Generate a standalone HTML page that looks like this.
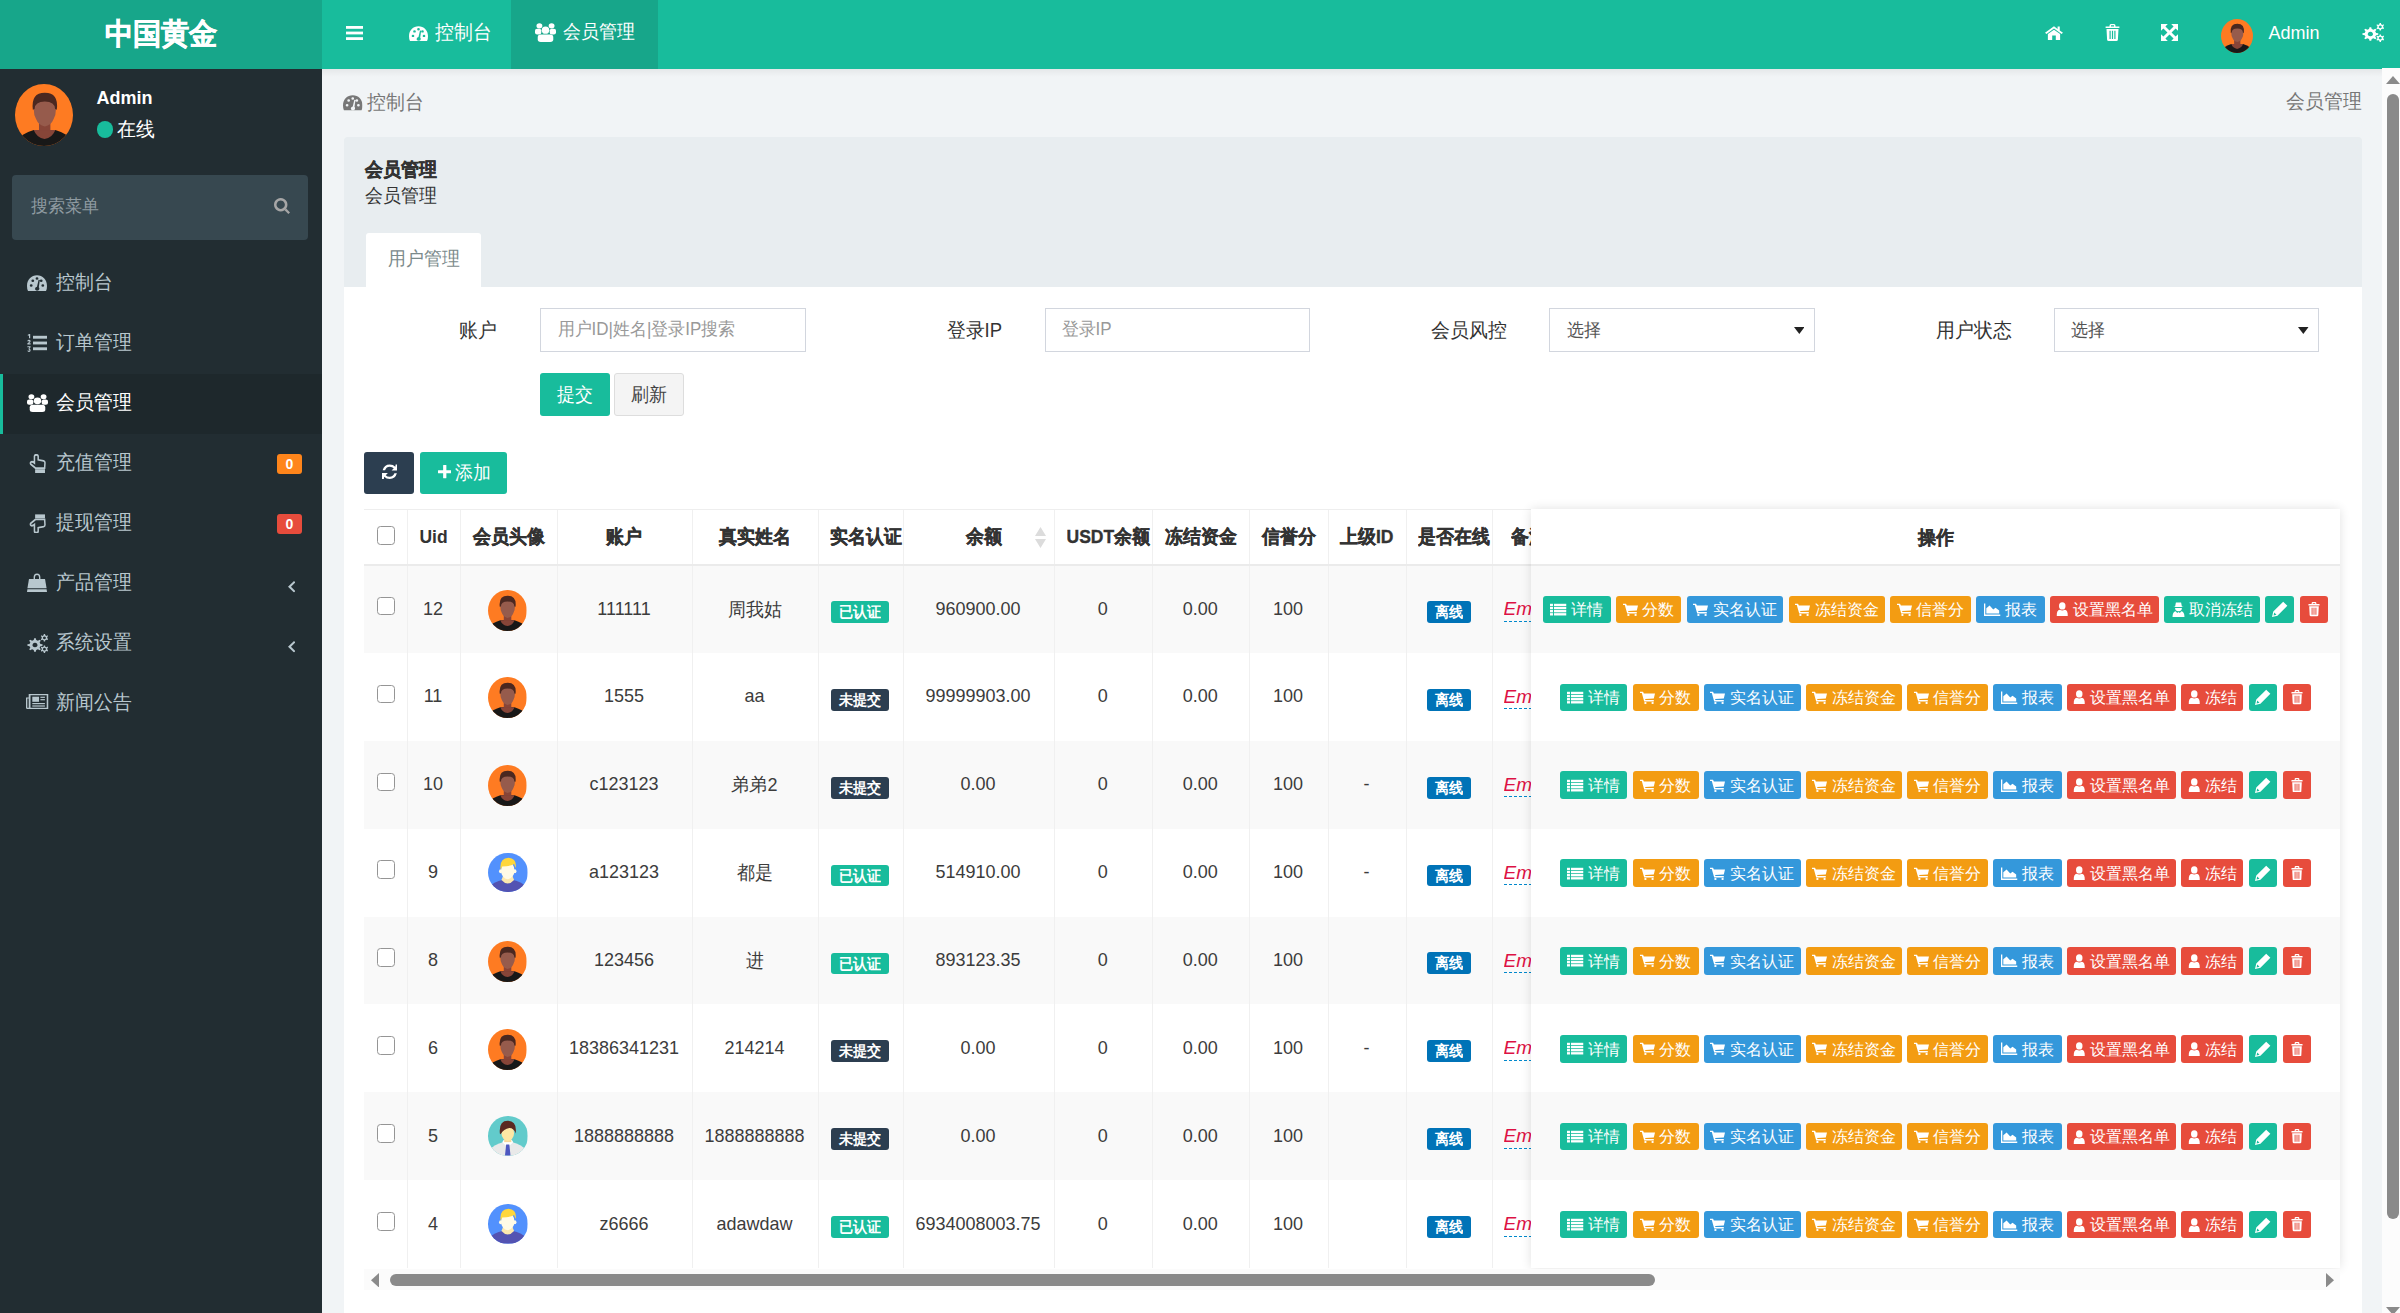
<!DOCTYPE html>
<html><head><meta charset="utf-8"><title>会员管理</title>
<style>
html,body{margin:0;padding:0}
body{width:2400px;height:1313px;overflow:hidden;position:relative;background:#f1f4f6;font-family:"Liberation Sans",sans-serif}
.a{position:absolute}
.t{white-space:nowrap;transform:scaleY(1.06)}
.b{-webkit-text-stroke:0.35px currentColor}
.btn{border-radius:3px;display:flex;align-items:center;justify-content:center;gap:4.5px;box-sizing:border-box}
</style></head><body>

<svg width="0" height="0" style="position:absolute">
<defs>
<symbol id="bars" viewBox="0 0 100 100"><rect x="0" y="0" width="100" height="20"/><rect x="0" y="40" width="100" height="20"/><rect x="0" y="80" width="100" height="20"/></symbol>
<symbol id="dash" viewBox="0 0 100 100"><path fill-rule="evenodd" d="M5 100 Q0 88 0 68 C0 28 22 2 50 2 C78 2 100 28 100 68 Q100 88 95 100 Z M14 66 a7 8 0 1 0 14 0 a7 8 0 1 0 -14 0 Z M22 36 a7 8 0 1 0 14 0 a7 8 0 1 0 -14 0 Z M43 22 a7 8 0 1 0 14 0 a7 8 0 1 0 -14 0 Z M64 36 a7 8 0 1 0 14 0 a7 8 0 1 0 -14 0 Z M72 66 a7 8 0 1 0 14 0 a7 8 0 1 0 -14 0 Z M40 88 Q40 76 50 74 L58 30 L64 32 L59 76 Q62 80 62 88 Q60 98 50 98 Q40 96 40 88 Z"/></symbol>
<symbol id="users" viewBox="0 0 100 100"><circle cx="21" cy="15" r="14"/><circle cx="79" cy="15" r="14"/><rect x="0" y="30" width="30" height="30" rx="10"/><rect x="70" y="30" width="30" height="30" rx="10"/><ellipse cx="50" cy="38" rx="18" ry="19"/><rect x="13" y="60" width="74" height="40" rx="14"/></symbol>
<symbol id="home" viewBox="0 0 100 100"><path d="M50 8 L0 52 L8 60 L50 24 L92 60 L100 52 L82 36 L82 10 L70 10 L70 26 Z"/><path d="M16 60 L50 32 L84 60 L84 100 L60 100 L60 70 L40 70 L40 100 L16 100 Z"/></symbol>
<symbol id="trash" viewBox="0 0 100 100"><path d="M30 10 Q30 0 40 0 L60 0 Q70 0 70 10 L70 14 L96 14 L96 24 L4 24 L4 14 L30 14 Z M40 8 L40 14 L60 14 L60 8 Z" fill-rule="evenodd"/><path d="M10 30 L90 30 L86 92 Q85 100 76 100 L24 100 Q15 100 14 92 Z M30 40 L30 88 L38 88 L38 40 Z M46 40 L46 88 L54 88 L54 40 Z M62 40 L62 88 L70 88 L70 40 Z" fill-rule="evenodd"/></symbol>
<symbol id="expand" viewBox="0 0 100 100"><path d="M0 0 L40 0 L26 14 L50 38 L74 14 L60 0 L100 0 L100 40 L86 26 L62 50 L86 74 L100 60 L100 100 L60 100 L74 86 L50 62 L26 86 L40 100 L0 100 L0 60 L14 74 L38 50 L14 26 L0 40 Z"/></symbol>
<symbol id="cogs" viewBox="0 0 100 100"><path d="M34 22 L42 22 L44 32 L52 36 L60 30 L66 36 L60 44 L64 52 L74 54 L74 62 L64 64 L60 72 L66 80 L60 86 L52 80 L44 84 L42 94 L34 94 L32 84 L24 80 L16 86 L10 80 L16 72 L12 64 L2 62 L2 54 L12 52 L16 44 L10 36 L16 30 L24 36 L32 32 Z M38 46 a12 12 0 1 0 .1 0 Z" fill-rule="evenodd"/><path d="M80 0 L86 0 L87 7 L93 10 L98 6 L100 12 L96 16 L97 22 L100 26 L98 32 L92 30 L87 33 L86 40 L80 40 L79 33 L73 30 L68 33 L66 27 L70 22 L70 16 L66 12 L68 6 L73 10 L79 7 Z M83 13 a7 7 0 1 0 .1 0 Z" fill-rule="evenodd"/><path d="M80 60 L86 60 L87 67 L93 70 L98 66 L100 72 L96 76 L97 82 L100 86 L98 92 L92 90 L87 93 L86 100 L80 100 L79 93 L73 90 L68 93 L66 87 L70 82 L70 76 L66 72 L68 66 L73 70 L79 67 Z M83 73 a7 7 0 1 0 .1 0 Z" fill-rule="evenodd"/></symbol>
<symbol id="search" viewBox="0 0 100 100"><path d="M42 0 a42 42 0 1 0 .1 0 Z M42 16 a26 26 0 1 1 -.1 0 Z" fill-rule="evenodd"/><path d="M66 76 L76 66 L100 90 L90 100 Z"/></symbol>
<symbol id="listol" viewBox="0 0 100 100"><rect x="30" y="10" width="70" height="16"/><rect x="30" y="42" width="70" height="16"/><rect x="30" y="74" width="70" height="16"/><path d="M4 4 L12 0 L16 0 L16 24 L10 24 L10 8 L4 10 Z"/><path d="M2 40 Q2 32 10 32 Q18 32 18 40 Q18 46 10 52 L18 52 L18 58 L2 58 L2 52 Q12 44 12 40 Q12 38 10 38 Q8 38 8 41 Z"/><path d="M2 68 L18 68 L18 74 L12 80 Q18 82 18 90 Q18 100 10 100 Q2 100 2 92 L8 92 Q8 94 10 94 Q12 94 12 90 Q12 86 8 86 L8 80 L12 74 L2 74 Z"/></symbol>
<symbol id="handup" viewBox="0 0 100 100"><path d="M32 46 L32 11 Q32 4 43 4 Q54 4 54 11 L54 30 L86 35 Q94 37 94 45 L92 72 L38 72 L11 53 Q5 46 12 41 Q20 37 32 46 Z" fill="none" stroke-width="9"/><rect x="36" y="78" width="58" height="20"/></symbol>
<symbol id="handdown" viewBox="0 0 100 100"><path d="M32 54 L32 89 Q32 96 43 96 Q54 96 54 89 L54 70 L86 65 Q94 63 94 55 L92 28 L38 28 L11 47 Q5 54 12 59 Q20 63 32 54 Z" fill="none" stroke-width="9"/><rect x="36" y="2" width="58" height="20"/></symbol>
<symbol id="bag" viewBox="0 0 100 100"><path d="M33 38 L33 22 Q33 2 50 2 Q67 2 67 22 L67 38 L60 38 L60 22 Q60 10 50 10 Q40 10 40 22 L40 38 Z"/><path d="M10 32 L90 32 L98 80 L2 80 Z"/><path d="M2 86 L98 86 L100 100 L0 100 Z"/></symbol>
<symbol id="news" viewBox="0 0 100 100"><path d="M12 0 L100 0 L100 100 L6 100 Q0 100 0 92 L0 24 L12 24 Z M20 8 L20 92 L92 92 L92 8 Z M6 30 L6 92 L12 92 L12 30 Z" fill-rule="evenodd"/><rect x="28" y="18" width="30" height="34"/><rect x="64" y="18" width="20" height="8"/><rect x="64" y="34" width="20" height="8"/><rect x="28" y="60" width="56" height="8"/><rect x="28" y="76" width="56" height="8"/></symbol>
<symbol id="angleleft" viewBox="0 0 100 100"><path d="M100 12 L40 50 L100 88 L80 100 L0 50 L80 0 Z"/></symbol>
<symbol id="refresh" viewBox="0 0 100 100"><path d="M88 4 L100 4 L100 42 L62 42 L76 28 Q66 18 50 18 Q28 18 20 40 L4 40 Q14 4 50 4 Q72 4 86 18 Z"/><path d="M12 96 L0 96 L0 58 L38 58 L24 72 Q34 82 50 82 Q72 82 80 60 L96 60 Q86 96 50 96 Q28 96 14 82 Z"/></symbol>
<symbol id="plus" viewBox="0 0 100 100"><rect x="38" y="0" width="24" height="100" rx="3"/><rect x="0" y="38" width="100" height="24" rx="3"/></symbol>
<symbol id="list" viewBox="0 0 100 100"><rect x="0" y="6" width="18" height="18"/><rect x="24" y="6" width="76" height="18"/><rect x="0" y="30" width="18" height="18"/><rect x="24" y="30" width="76" height="18"/><rect x="0" y="54" width="18" height="18"/><rect x="24" y="54" width="76" height="18"/><rect x="0" y="78" width="18" height="18"/><rect x="24" y="78" width="76" height="18"/></symbol>
<symbol id="cart" viewBox="0 0 100 100"><path d="M0 6 L20 6 L26 20 L100 20 L92 58 L34 62 L36 70 L92 70 L92 80 L28 80 L12 16 L0 16 Z"/><circle cx="36" cy="92" r="8"/><circle cx="84" cy="92" r="8"/><path d="M56 26 L64 26 L64 34 L72 34 L72 42 L64 42 L64 50 L56 50 L56 42 L48 42 L48 34 L56 34 Z" fill="#000" opacity=".0"/></symbol>
<symbol id="area" viewBox="0 0 100 100"><path d="M0 4 L8 4 L8 88 L100 88 L100 100 L0 100 Z"/><path d="M14 80 L14 40 L34 20 L56 50 L70 36 L92 58 L92 80 Z"/></symbol>
<symbol id="user" viewBox="0 0 100 100"><circle cx="50" cy="28" r="26"/><path d="M6 100 Q4 60 30 56 Q50 66 70 56 Q96 60 94 100 Z"/></symbol>
<symbol id="secret" viewBox="0 0 100 100"><path d="M30 4 L70 4 L76 30 L90 34 L10 34 L24 30 Z"/><path d="M24 40 L76 40 Q78 60 50 62 Q22 60 24 40 Z"/><path d="M4 100 Q4 66 28 62 L40 74 L50 66 L60 74 L72 62 Q96 66 96 100 Z"/></symbol>
<symbol id="pencil" viewBox="0 0 100 100"><path d="M70 4 L96 30 L34 92 L0 100 L8 66 Z M14 72 L10 90 L28 86 Z" fill-rule="evenodd"/></symbol>
<symbol id="caret" viewBox="0 0 100 100"><path d="M0 0 L100 0 L50 100 Z"/></symbol>
</defs></svg>

<div class="a" style="left:0px;top:0px;width:322px;height:68.6px;background:#17a68a"></div>
<div class="a" style="left:322px;top:0px;width:2078px;height:68.6px;background:#18bc9c"></div>
<div class="a t b" style="left:0.00px;top:13.50px;width:322px;line-height:40px;height:40px;font-size:28px;color:#fff;font-weight:bold;text-align:center;">中国黄金</div>
<svg class="a" style="left:346px;top:26px;" width="17" height="14" viewBox="0 0 100 100" preserveAspectRatio="none" fill="#fff" stroke="#fff" stroke-width="0"><use href="#bars"/></svg>
<svg class="a" style="left:409px;top:26px;" width="19" height="15" viewBox="0 0 100 100" preserveAspectRatio="none" fill="#fff" stroke="#fff" stroke-width="0"><use href="#dash"/></svg>
<div class="a t" style="left:435.00px;top:19.00px;width:600px;line-height:27px;height:27px;font-size:19px;color:#fff;font-weight:normal;text-align:left;">控制台</div>
<div class="a" style="left:511px;top:0px;width:146.5px;height:68.6px;background:#17a68a"></div>
<svg class="a" style="left:535px;top:23px;" width="21" height="19" viewBox="0 0 100 100" preserveAspectRatio="none" fill="#fff" stroke="#fff" stroke-width="0"><use href="#users"/></svg>
<div class="a t" style="left:563.00px;top:20.00px;width:600px;line-height:25px;height:25px;font-size:18px;color:#fff;font-weight:normal;text-align:left;">会员管理</div>
<svg class="a" style="left:2045px;top:25px;" width="18" height="15" viewBox="0 0 100 100" preserveAspectRatio="none" fill="#fff" stroke="#fff" stroke-width="0"><use href="#home"/></svg>
<svg class="a" style="left:2105px;top:24px;" width="15" height="17" viewBox="0 0 100 100" preserveAspectRatio="none" fill="#fff" stroke="#fff" stroke-width="0"><use href="#trash"/></svg>
<svg class="a" style="left:2161px;top:24px;" width="17" height="17" viewBox="0 0 100 100" preserveAspectRatio="none" fill="#fff" stroke="#fff" stroke-width="0"><use href="#expand"/></svg>
<div class="a" style="left:2221px;top:19px;width:32px;height:34px;border-radius:50%;overflow:hidden"><svg width="100%" height="100%" viewBox="0 0 100 100" preserveAspectRatio="none" style="display:block"><rect width="100" height="100" fill="#fe7b22"/><path d="M0 100 L0 92 L12 82 Q22 76 32 73.5 L69 73.5 Q79 76 89 82 L100 92 L100 100 Z" fill="#181818"/><path d="M32 73.5 L69 73.5 Q64 86 50.5 88 Q37 86 32 73.5 Z" fill="#874538"/><rect x="41" y="60" width="19.5" height="15" fill="#874538"/><path d="M32 40 Q31 27 40 24 L61 24 Q70 27 70 40 Q70 50 66 56 Q62 66 51 68 Q40 66 36 56 Q32 50 32 40 Z" fill="#965b4c"/><path d="M30.5 41 Q27 14 51 14 Q75 14 71.5 41 L68.5 40 Q68 28 51 28 Q34 28 33.5 40 Z" fill="#4b2820"/></svg></div>
<div class="a t" style="left:2268.50px;top:20.00px;width:600px;line-height:26px;height:26px;font-size:18px;color:#fff;font-weight:normal;text-align:left;">Admin</div>
<svg class="a" style="left:2362px;top:23px;" width="22" height="19" viewBox="0 0 100 100" preserveAspectRatio="none" fill="#fff" stroke="#fff" stroke-width="0"><use href="#cogs"/></svg>
<div class="a" style="left:0px;top:68.6px;width:322px;height:1245px;background:#222d32"></div>
<div class="a" style="left:14.5px;top:83.8px;width:58.5px;height:62.5px;border-radius:50%;overflow:hidden"><svg width="100%" height="100%" viewBox="0 0 100 100" preserveAspectRatio="none" style="display:block"><rect width="100" height="100" fill="#fe7b22"/><path d="M0 100 L0 92 L12 82 Q22 76 32 73.5 L69 73.5 Q79 76 89 82 L100 92 L100 100 Z" fill="#181818"/><path d="M32 73.5 L69 73.5 Q64 86 50.5 88 Q37 86 32 73.5 Z" fill="#874538"/><rect x="41" y="60" width="19.5" height="15" fill="#874538"/><path d="M32 40 Q31 27 40 24 L61 24 Q70 27 70 40 Q70 50 66 56 Q62 66 51 68 Q40 66 36 56 Q32 50 32 40 Z" fill="#965b4c"/><path d="M30.5 41 Q27 14 51 14 Q75 14 71.5 41 L68.5 40 Q68 28 51 28 Q34 28 33.5 40 Z" fill="#4b2820"/></svg></div>
<div class="a t" style="left:96.50px;top:85.00px;width:600px;line-height:26px;height:26px;font-size:18px;color:#fff;font-weight:bold;text-align:left;">Admin</div>
<div class="a" style="left:96.5px;top:121px;width:16.5px;height:16.5px;background:#18bc9c;border-radius:50%"></div>
<div class="a t" style="left:117.00px;top:115.50px;width:600px;line-height:27px;height:27px;font-size:19px;color:#fff;font-weight:normal;text-align:left;">在线</div>
<div class="a" style="left:12px;top:175px;width:296px;height:64.5px;background:#374850;border-radius:4px"></div>
<div class="a t" style="left:30.50px;top:194.50px;width:600px;line-height:24px;height:24px;font-size:17px;color:#8f9ba1;font-weight:normal;text-align:left;">搜索菜单</div>
<svg class="a" style="left:274px;top:198px;" width="16" height="16" viewBox="0 0 100 100" preserveAspectRatio="none" fill="#a6a6a6" stroke="#a6a6a6" stroke-width="0"><use href="#search"/></svg>
<svg class="a" style="left:27px;top:275.3px;" width="20" height="16" viewBox="0 0 100 100" preserveAspectRatio="none" fill="#b8c7ce" stroke="#b8c7ce" stroke-width="0"><use href="#dash"/></svg>
<div class="a t" style="left:55.50px;top:270.30px;width:600px;line-height:26px;height:26px;font-size:18.7px;color:#b8c7ce;font-weight:normal;text-align:left;">控制台</div>
<svg class="a" style="left:27px;top:334.3px;" width="20" height="18" viewBox="0 0 100 100" preserveAspectRatio="none" fill="#b8c7ce" stroke="#b8c7ce" stroke-width="0"><use href="#listol"/></svg>
<div class="a t" style="left:55.50px;top:330.30px;width:600px;line-height:26px;height:26px;font-size:18.7px;color:#b8c7ce;font-weight:normal;text-align:left;">订单管理</div>
<div class="a" style="left:0px;top:373.8px;width:322px;height:60px;background:#1e282c"></div>
<div class="a" style="left:0px;top:373.8px;width:2.5px;height:60px;background:#18bc9c"></div>
<svg class="a" style="left:27px;top:394.3px;" width="21" height="18" viewBox="0 0 100 100" preserveAspectRatio="none" fill="#fff" stroke="#fff" stroke-width="0"><use href="#users"/></svg>
<div class="a t" style="left:55.50px;top:390.30px;width:600px;line-height:26px;height:26px;font-size:18.7px;color:#fff;font-weight:normal;text-align:left;">会员管理</div>
<svg class="a" style="left:29px;top:453.55px;" width="17" height="19.5" viewBox="0 0 100 100" preserveAspectRatio="none" fill="#b8c7ce" stroke="#b8c7ce" stroke-width="0"><use href="#handup"/></svg>
<div class="a t" style="left:55.50px;top:450.30px;width:600px;line-height:26px;height:26px;font-size:18.7px;color:#b8c7ce;font-weight:normal;text-align:left;">充值管理</div>
<svg class="a" style="left:29px;top:513.55px;" width="17" height="19.5" viewBox="0 0 100 100" preserveAspectRatio="none" fill="#b8c7ce" stroke="#b8c7ce" stroke-width="0"><use href="#handdown"/></svg>
<div class="a t" style="left:55.50px;top:510.30px;width:600px;line-height:26px;height:26px;font-size:18.7px;color:#b8c7ce;font-weight:normal;text-align:left;">提现管理</div>
<svg class="a" style="left:27px;top:572.8px;" width="20" height="19" viewBox="0 0 100 100" preserveAspectRatio="none" fill="#b8c7ce" stroke="#b8c7ce" stroke-width="0"><use href="#bag"/></svg>
<div class="a t" style="left:55.50px;top:570.30px;width:600px;line-height:26px;height:26px;font-size:18.7px;color:#b8c7ce;font-weight:normal;text-align:left;">产品管理</div>
<svg class="a" style="left:27px;top:633.8px;" width="21" height="19" viewBox="0 0 100 100" preserveAspectRatio="none" fill="#b8c7ce" stroke="#b8c7ce" stroke-width="0"><use href="#cogs"/></svg>
<div class="a t" style="left:55.50px;top:630.30px;width:600px;line-height:26px;height:26px;font-size:18.7px;color:#b8c7ce;font-weight:normal;text-align:left;">系统设置</div>
<svg class="a" style="left:26px;top:694.0px;" width="22.5" height="15" viewBox="0 0 100 100" preserveAspectRatio="none" fill="#b8c7ce" stroke="#b8c7ce" stroke-width="0"><use href="#news"/></svg>
<div class="a t" style="left:55.50px;top:690.30px;width:600px;line-height:26px;height:26px;font-size:18.7px;color:#b8c7ce;font-weight:normal;text-align:left;">新闻公告</div>
<div class="a" style="left:277px;top:453.8px;width:25px;height:20.3px;background:#ff851b;border-radius:3px"></div>
<div class="a t" style="left:277.00px;top:453.90px;width:25px;line-height:20px;height:20px;font-size:14px;color:#fff;font-weight:bold;text-align:center;">0</div>
<div class="a" style="left:277px;top:513.7px;width:25px;height:20.6px;background:#e74c3c;border-radius:3px"></div>
<div class="a t" style="left:277.00px;top:514.00px;width:25px;line-height:20px;height:20px;font-size:14px;color:#fff;font-weight:bold;text-align:center;">0</div>
<svg class="a" style="left:287.5px;top:581px;" width="7.5" height="11.5" viewBox="0 0 100 100" preserveAspectRatio="none" fill="#b8c7ce" stroke="#b8c7ce" stroke-width="0"><use href="#angleleft"/></svg>
<svg class="a" style="left:287.5px;top:641px;" width="7.5" height="11.5" viewBox="0 0 100 100" preserveAspectRatio="none" fill="#b8c7ce" stroke="#b8c7ce" stroke-width="0"><use href="#angleleft"/></svg>
<div class="a" style="left:322px;top:68.6px;width:2060px;height:1245px;background:#f1f4f6"></div>
<div class="a" style="left:322px;top:68.6px;width:2060px;height:8px;background:linear-gradient(rgba(0,0,0,.05),rgba(0,0,0,0))"></div>
<svg class="a" style="left:343px;top:95px;" width="19.5" height="15.5" viewBox="0 0 100 100" preserveAspectRatio="none" fill="#777" stroke="#777" stroke-width="0"><use href="#dash"/></svg>
<div class="a t" style="left:366.50px;top:88.50px;width:600px;line-height:27px;height:27px;font-size:19px;color:#777;font-weight:normal;text-align:left;">控制台</div>
<div class="a t" style="left:2161.50px;top:89.00px;width:200px;line-height:26px;height:26px;font-size:18.5px;color:#777;font-weight:normal;text-align:right;">会员管理</div>
<div class="a" style="left:344px;top:137px;width:2017.5px;height:1200px;background:#fff;border-radius:3px"></div>
<div class="a" style="left:344px;top:137px;width:2017.5px;height:150px;background:#e8edf0;border-radius:3px 3px 0 0"></div>
<div class="a t b" style="left:364.50px;top:157.50px;width:600px;line-height:25px;height:25px;font-size:18px;color:#333;font-weight:bold;text-align:left;">会员管理</div>
<div class="a t" style="left:365.00px;top:183.50px;width:600px;line-height:25px;height:25px;font-size:18.2px;color:#333;font-weight:normal;text-align:left;">会员管理</div>
<div class="a" style="left:365.5px;top:233px;width:115px;height:54px;background:#fff;border-radius:3px 3px 0 0"></div>
<div class="a t" style="left:366.00px;top:247.00px;width:115px;line-height:25px;height:25px;font-size:18.2px;color:#7b8a8b;font-weight:normal;text-align:center;">用户管理</div>
<div class="a t" style="left:296.50px;top:317.50px;width:200px;line-height:26px;height:26px;font-size:18.5px;color:#333;font-weight:normal;text-align:right;">账户</div>
<div class="a" style="left:540px;top:308px;width:265.5px;height:43.5px;background:#fff;border:1px solid #d2d6de;box-sizing:border-box"></div>
<div class="a t" style="left:802.00px;top:317.50px;width:200px;line-height:26px;height:26px;font-size:18.5px;color:#333;font-weight:normal;text-align:right;">登录IP</div>
<div class="a" style="left:1044.7px;top:308px;width:265.5px;height:43.5px;background:#fff;border:1px solid #d2d6de;box-sizing:border-box"></div>
<div class="a t" style="left:1307.00px;top:317.50px;width:200px;line-height:26px;height:26px;font-size:18.5px;color:#333;font-weight:normal;text-align:right;">会员风控</div>
<div class="a" style="left:1549.3px;top:308px;width:265.5px;height:43.5px;background:#fff;border:1px solid #d2d6de;box-sizing:border-box"></div>
<div class="a t" style="left:1811.50px;top:317.50px;width:200px;line-height:26px;height:26px;font-size:18.5px;color:#333;font-weight:normal;text-align:right;">用户状态</div>
<div class="a" style="left:2053.5px;top:308px;width:265.5px;height:43.5px;background:#fff;border:1px solid #d2d6de;box-sizing:border-box"></div>
<div class="a t" style="left:557.50px;top:317.50px;width:600px;line-height:24px;height:24px;font-size:17px;color:#999;font-weight:normal;text-align:left;">用户ID|姓名|登录IP搜索</div>
<div class="a t" style="left:1061.50px;top:317.50px;width:600px;line-height:24px;height:24px;font-size:17px;color:#999;font-weight:normal;text-align:left;">登录IP</div>
<div class="a t" style="left:1566.50px;top:317.50px;width:600px;line-height:24px;height:24px;font-size:17.3px;color:#555;font-weight:normal;text-align:left;">选择</div>
<div class="a t" style="left:2071.00px;top:317.50px;width:600px;line-height:24px;height:24px;font-size:17.3px;color:#555;font-weight:normal;text-align:left;">选择</div>
<svg class="a" style="left:1793.8px;top:327px;" width="10.6" height="7" viewBox="0 0 100 100" preserveAspectRatio="none" fill="#222" stroke="#222" stroke-width="0"><use href="#caret"/></svg>
<svg class="a" style="left:2298px;top:327px;" width="10.6" height="7" viewBox="0 0 100 100" preserveAspectRatio="none" fill="#222" stroke="#222" stroke-width="0"><use href="#caret"/></svg>
<div class="a" style="left:540px;top:373px;width:69.7px;height:43px;background:#18bc9c;border-radius:3px"></div>
<div class="a t" style="left:540.05px;top:382.50px;width:69.7px;line-height:24px;height:24px;font-size:17.5px;color:#fff;font-weight:normal;text-align:center;">提交</div>
<div class="a" style="left:614px;top:373px;width:70px;height:43px;background:#f4f4f4;border:1px solid #ddd;border-radius:3px;box-sizing:border-box"></div>
<div class="a t" style="left:614.00px;top:382.50px;width:70px;line-height:24px;height:24px;font-size:17.5px;color:#444;font-weight:normal;text-align:center;">刷新</div>
<div class="a" style="left:364px;top:451.7px;width:50px;height:42.3px;background:#2c3e50;border-radius:3px"></div>
<svg class="a" style="left:381.5px;top:464px;" width="15.5" height="15.5" viewBox="0 0 100 100" preserveAspectRatio="none" fill="#fff" stroke="#fff" stroke-width="0"><use href="#refresh"/></svg>
<div class="a" style="left:420px;top:451.7px;width:87px;height:42.3px;background:#18bc9c;border-radius:3px"></div>
<svg class="a" style="left:437.5px;top:465px;" width="13.5" height="13.5" viewBox="0 0 100 100" preserveAspectRatio="none" fill="#fff" stroke="#fff" stroke-width="0"><use href="#plus"/></svg>
<div class="a t" style="left:455.00px;top:460.50px;width:600px;line-height:24px;height:24px;font-size:17.5px;color:#fff;font-weight:normal;text-align:left;">添加</div>
<div class="a" style="left:364px;top:508.5px;width:1976px;height:759.5px;background:#fff"></div>
<div class="a" style="left:364px;top:565.0px;width:1976px;height:87.875px;background:#f9f9f9"></div>
<div class="a" style="left:364px;top:740.75px;width:1976px;height:87.875px;background:#f9f9f9"></div>
<div class="a" style="left:364px;top:916.5px;width:1976px;height:87.875px;background:#f9f9f9"></div>
<div class="a" style="left:364px;top:1092.25px;width:1976px;height:87.875px;background:#f9f9f9"></div>
<div class="a" style="left:407px;top:508.5px;width:1px;height:759.5px;background:#f0f0f0"></div>
<div class="a" style="left:459.5px;top:508.5px;width:1px;height:759.5px;background:#f0f0f0"></div>
<div class="a" style="left:556.5px;top:508.5px;width:1px;height:759.5px;background:#f0f0f0"></div>
<div class="a" style="left:691.5px;top:508.5px;width:1px;height:759.5px;background:#f0f0f0"></div>
<div class="a" style="left:817.5px;top:508.5px;width:1px;height:759.5px;background:#f0f0f0"></div>
<div class="a" style="left:903px;top:508.5px;width:1px;height:759.5px;background:#f0f0f0"></div>
<div class="a" style="left:1053.5px;top:508.5px;width:1px;height:759.5px;background:#f0f0f0"></div>
<div class="a" style="left:1152px;top:508.5px;width:1px;height:759.5px;background:#f0f0f0"></div>
<div class="a" style="left:1248.5px;top:508.5px;width:1px;height:759.5px;background:#f0f0f0"></div>
<div class="a" style="left:1327.5px;top:508.5px;width:1px;height:759.5px;background:#f0f0f0"></div>
<div class="a" style="left:1405.5px;top:508.5px;width:1px;height:759.5px;background:#f0f0f0"></div>
<div class="a" style="left:1492px;top:508.5px;width:1px;height:759.5px;background:#f0f0f0"></div>
<div class="a" style="left:364px;top:508.5px;width:1976px;height:1px;background:#eeeeee"></div>
<div class="a" style="left:364px;top:563.5px;width:1976px;height:2px;background:#ebebeb"></div>
<div class="a" style="left:376.7px;top:526.3px;width:18.2px;height:18.6px;border:1.8px solid #959595;border-radius:3.5px;box-sizing:border-box;background:#fff"></div>
<div class="a t" style="left:403.50px;top:524.80px;width:60px;line-height:24px;height:24px;font-size:17.5px;color:#333;font-weight:bold;text-align:center;">Uid</div>
<div class="a t b" style="left:460.00px;top:524.80px;width:97px;line-height:24px;height:24px;font-size:17.5px;color:#333;font-weight:bold;text-align:center;">会员头像</div>
<div class="a t b" style="left:556.50px;top:524.80px;width:135px;line-height:24px;height:24px;font-size:17.5px;color:#333;font-weight:bold;text-align:center;">账户</div>
<div class="a t b" style="left:691.50px;top:524.80px;width:126px;line-height:24px;height:24px;font-size:17.5px;color:#333;font-weight:bold;text-align:center;">真实姓名</div>
<div class="a t b" style="left:829.50px;top:524.80px;width:74px;line-height:24px;height:24px;font-size:17.5px;color:#333;font-weight:bold;text-align:left;overflow:hidden;white-space:nowrap">实名认证</div>
<div class="a t b" style="left:934.00px;top:524.80px;width:100px;line-height:24px;height:24px;font-size:17.5px;color:#333;font-weight:bold;text-align:center;">余额</div>
<svg class="a" style="left:1034.5px;top:527px" width="11" height="21" viewBox="0 0 11 21"><path d="M5.5 0 L11 9 L0 9 Z M5.5 21 L11 12 L0 12 Z" fill="#dcdcdc"/></svg>
<div class="a t b" style="left:1066.50px;top:524.80px;width:86px;line-height:24px;height:24px;font-size:17.5px;color:#333;font-weight:bold;text-align:left;overflow:hidden;white-space:nowrap">USDT余额</div>
<div class="a t b" style="left:1153.00px;top:524.80px;width:96px;line-height:24px;height:24px;font-size:17.5px;color:#333;font-weight:bold;text-align:center;">冻结资金</div>
<div class="a t b" style="left:1249.20px;top:524.80px;width:79px;line-height:24px;height:24px;font-size:17.5px;color:#333;font-weight:bold;text-align:center;">信誉分</div>
<div class="a t b" style="left:1327.70px;top:524.80px;width:78px;line-height:24px;height:24px;font-size:17.5px;color:#333;font-weight:bold;text-align:center;">上级ID</div>
<div class="a t b" style="left:1418.00px;top:524.80px;width:74px;line-height:24px;height:24px;font-size:17.5px;color:#333;font-weight:bold;text-align:left;overflow:hidden;white-space:nowrap">是否在线</div>
<div class="a t b" style="left:1511.00px;top:524.80px;width:20px;line-height:24px;height:24px;font-size:17.5px;color:#333;font-weight:bold;text-align:left;overflow:hidden;white-space:nowrap">备注</div>
<div class="a" style="left:376.7px;top:596.8px;width:18.2px;height:18.6px;border:1.8px solid #959595;border-radius:3.5px;box-sizing:border-box;background:#fff"></div>
<div class="a t" style="left:407.00px;top:596.50px;width:52px;line-height:25px;height:25px;font-size:18px;color:#3c3c3c;font-weight:normal;text-align:center;">12</div>
<div class="a" style="left:488.3px;top:589.5px;width:38.5px;height:41px;border-radius:50%;overflow:hidden"><svg width="100%" height="100%" viewBox="0 0 100 100" preserveAspectRatio="none" style="display:block"><rect width="100" height="100" fill="#fe7b22"/><path d="M0 100 L0 92 L12 82 Q22 76 32 73.5 L69 73.5 Q79 76 89 82 L100 92 L100 100 Z" fill="#181818"/><path d="M32 73.5 L69 73.5 Q64 86 50.5 88 Q37 86 32 73.5 Z" fill="#874538"/><rect x="41" y="60" width="19.5" height="15" fill="#874538"/><path d="M32 40 Q31 27 40 24 L61 24 Q70 27 70 40 Q70 50 66 56 Q62 66 51 68 Q40 66 36 56 Q32 50 32 40 Z" fill="#965b4c"/><path d="M30.5 41 Q27 14 51 14 Q75 14 71.5 41 L68.5 40 Q68 28 51 28 Q34 28 33.5 40 Z" fill="#4b2820"/></svg></div>
<div class="a t" style="left:556.50px;top:596.50px;width:135px;line-height:25px;height:25px;font-size:18px;color:#3c3c3c;font-weight:normal;text-align:center;">111111</div>
<div class="a t" style="left:691.50px;top:597.50px;width:126px;line-height:25px;height:25px;font-size:18px;color:#3c3c3c;font-weight:normal;text-align:center;">周我姑</div>
<div class="a" style="left:831px;top:601.0px;width:57.6px;height:21.8px;background:#18bc9c;border-radius:3px"></div>
<div class="a t" style="left:831.20px;top:602.00px;width:57.6px;line-height:20px;height:20px;font-size:14px;color:#fff;font-weight:bold;text-align:center;">已认证</div>
<div class="a t" style="left:903.00px;top:596.50px;width:150px;line-height:25px;height:25px;font-size:18px;color:#3c3c3c;font-weight:normal;text-align:center;">960900.00</div>
<div class="a t" style="left:1053.75px;top:596.50px;width:98px;line-height:25px;height:25px;font-size:18px;color:#3c3c3c;font-weight:normal;text-align:center;">0</div>
<div class="a t" style="left:1152.25px;top:596.50px;width:96px;line-height:25px;height:25px;font-size:18px;color:#3c3c3c;font-weight:normal;text-align:center;">0.00</div>
<div class="a t" style="left:1248.50px;top:596.50px;width:79px;line-height:25px;height:25px;font-size:18px;color:#3c3c3c;font-weight:normal;text-align:center;">100</div>
<div class="a" style="left:1427px;top:600.9px;width:44px;height:21.9px;background:#0073b7;border-radius:3px"></div>
<div class="a t" style="left:1427.00px;top:601.90px;width:44px;line-height:20px;height:20px;font-size:14px;color:#fff;font-weight:bold;text-align:center;">离线</div>
<div class="a" style="left:1503.5px;top:596.00px;width:27.5px;height:28px;overflow:hidden"><span style="font-size:19px;line-height:26px;font-style:italic;color:#dd1144;border-bottom:1px dashed #0088cc;white-space:nowrap;display:inline-block;height:24.5px">Empty</span></div>
<div class="a" style="left:376.7px;top:684.675px;width:18.2px;height:18.6px;border:1.8px solid #959595;border-radius:3.5px;box-sizing:border-box;background:#fff"></div>
<div class="a t" style="left:407.00px;top:684.38px;width:52px;line-height:25px;height:25px;font-size:18px;color:#3c3c3c;font-weight:normal;text-align:center;">11</div>
<div class="a" style="left:488.3px;top:677.375px;width:38.5px;height:41px;border-radius:50%;overflow:hidden"><svg width="100%" height="100%" viewBox="0 0 100 100" preserveAspectRatio="none" style="display:block"><rect width="100" height="100" fill="#fe7b22"/><path d="M0 100 L0 92 L12 82 Q22 76 32 73.5 L69 73.5 Q79 76 89 82 L100 92 L100 100 Z" fill="#181818"/><path d="M32 73.5 L69 73.5 Q64 86 50.5 88 Q37 86 32 73.5 Z" fill="#874538"/><rect x="41" y="60" width="19.5" height="15" fill="#874538"/><path d="M32 40 Q31 27 40 24 L61 24 Q70 27 70 40 Q70 50 66 56 Q62 66 51 68 Q40 66 36 56 Q32 50 32 40 Z" fill="#965b4c"/><path d="M30.5 41 Q27 14 51 14 Q75 14 71.5 41 L68.5 40 Q68 28 51 28 Q34 28 33.5 40 Z" fill="#4b2820"/></svg></div>
<div class="a t" style="left:556.50px;top:684.38px;width:135px;line-height:25px;height:25px;font-size:18px;color:#3c3c3c;font-weight:normal;text-align:center;">1555</div>
<div class="a t" style="left:691.50px;top:684.38px;width:126px;line-height:25px;height:25px;font-size:18px;color:#3c3c3c;font-weight:normal;text-align:center;">aa</div>
<div class="a" style="left:831px;top:688.875px;width:57.6px;height:21.8px;background:#2c3e50;border-radius:3px"></div>
<div class="a t" style="left:831.20px;top:689.88px;width:57.6px;line-height:20px;height:20px;font-size:14px;color:#fff;font-weight:bold;text-align:center;">未提交</div>
<div class="a t" style="left:903.00px;top:684.38px;width:150px;line-height:25px;height:25px;font-size:18px;color:#3c3c3c;font-weight:normal;text-align:center;">99999903.00</div>
<div class="a t" style="left:1053.75px;top:684.38px;width:98px;line-height:25px;height:25px;font-size:18px;color:#3c3c3c;font-weight:normal;text-align:center;">0</div>
<div class="a t" style="left:1152.25px;top:684.38px;width:96px;line-height:25px;height:25px;font-size:18px;color:#3c3c3c;font-weight:normal;text-align:center;">0.00</div>
<div class="a t" style="left:1248.50px;top:684.38px;width:79px;line-height:25px;height:25px;font-size:18px;color:#3c3c3c;font-weight:normal;text-align:center;">100</div>
<div class="a" style="left:1427px;top:688.775px;width:44px;height:21.9px;background:#0073b7;border-radius:3px"></div>
<div class="a t" style="left:1427.00px;top:689.77px;width:44px;line-height:20px;height:20px;font-size:14px;color:#fff;font-weight:bold;text-align:center;">离线</div>
<div class="a" style="left:1503.5px;top:683.88px;width:27.5px;height:28px;overflow:hidden"><span style="font-size:19px;line-height:26px;font-style:italic;color:#dd1144;border-bottom:1px dashed #0088cc;white-space:nowrap;display:inline-block;height:24.5px">Empty</span></div>
<div class="a" style="left:376.7px;top:772.55px;width:18.2px;height:18.6px;border:1.8px solid #959595;border-radius:3.5px;box-sizing:border-box;background:#fff"></div>
<div class="a t" style="left:407.00px;top:772.25px;width:52px;line-height:25px;height:25px;font-size:18px;color:#3c3c3c;font-weight:normal;text-align:center;">10</div>
<div class="a" style="left:488.3px;top:765.25px;width:38.5px;height:41px;border-radius:50%;overflow:hidden"><svg width="100%" height="100%" viewBox="0 0 100 100" preserveAspectRatio="none" style="display:block"><rect width="100" height="100" fill="#fe7b22"/><path d="M0 100 L0 92 L12 82 Q22 76 32 73.5 L69 73.5 Q79 76 89 82 L100 92 L100 100 Z" fill="#181818"/><path d="M32 73.5 L69 73.5 Q64 86 50.5 88 Q37 86 32 73.5 Z" fill="#874538"/><rect x="41" y="60" width="19.5" height="15" fill="#874538"/><path d="M32 40 Q31 27 40 24 L61 24 Q70 27 70 40 Q70 50 66 56 Q62 66 51 68 Q40 66 36 56 Q32 50 32 40 Z" fill="#965b4c"/><path d="M30.5 41 Q27 14 51 14 Q75 14 71.5 41 L68.5 40 Q68 28 51 28 Q34 28 33.5 40 Z" fill="#4b2820"/></svg></div>
<div class="a t" style="left:556.50px;top:772.25px;width:135px;line-height:25px;height:25px;font-size:18px;color:#3c3c3c;font-weight:normal;text-align:center;">c123123</div>
<div class="a t" style="left:691.50px;top:773.25px;width:126px;line-height:25px;height:25px;font-size:18px;color:#3c3c3c;font-weight:normal;text-align:center;">弟弟2</div>
<div class="a" style="left:831px;top:776.75px;width:57.6px;height:21.8px;background:#2c3e50;border-radius:3px"></div>
<div class="a t" style="left:831.20px;top:777.75px;width:57.6px;line-height:20px;height:20px;font-size:14px;color:#fff;font-weight:bold;text-align:center;">未提交</div>
<div class="a t" style="left:903.00px;top:772.25px;width:150px;line-height:25px;height:25px;font-size:18px;color:#3c3c3c;font-weight:normal;text-align:center;">0.00</div>
<div class="a t" style="left:1053.75px;top:772.25px;width:98px;line-height:25px;height:25px;font-size:18px;color:#3c3c3c;font-weight:normal;text-align:center;">0</div>
<div class="a t" style="left:1152.25px;top:772.25px;width:96px;line-height:25px;height:25px;font-size:18px;color:#3c3c3c;font-weight:normal;text-align:center;">0.00</div>
<div class="a t" style="left:1248.50px;top:772.25px;width:79px;line-height:25px;height:25px;font-size:18px;color:#3c3c3c;font-weight:normal;text-align:center;">100</div>
<div class="a t" style="left:1327.50px;top:772.25px;width:78px;line-height:25px;height:25px;font-size:18px;color:#3c3c3c;font-weight:normal;text-align:center;">-</div>
<div class="a" style="left:1427px;top:776.65px;width:44px;height:21.9px;background:#0073b7;border-radius:3px"></div>
<div class="a t" style="left:1427.00px;top:777.65px;width:44px;line-height:20px;height:20px;font-size:14px;color:#fff;font-weight:bold;text-align:center;">离线</div>
<div class="a" style="left:1503.5px;top:771.75px;width:27.5px;height:28px;overflow:hidden"><span style="font-size:19px;line-height:26px;font-style:italic;color:#dd1144;border-bottom:1px dashed #0088cc;white-space:nowrap;display:inline-block;height:24.5px">Empty</span></div>
<div class="a" style="left:376.7px;top:860.425px;width:18.2px;height:18.6px;border:1.8px solid #959595;border-radius:3.5px;box-sizing:border-box;background:#fff"></div>
<div class="a t" style="left:407.00px;top:860.12px;width:52px;line-height:25px;height:25px;font-size:18px;color:#3c3c3c;font-weight:normal;text-align:center;">9</div>
<div class="a" style="left:488px;top:852.825px;width:39.5px;height:39.6px;border-radius:50%;overflow:hidden"><svg width="100%" height="100%" viewBox="0 0 100 100" preserveAspectRatio="none" style="display:block"><rect width="100" height="100" fill="#5291fd"/><path d="M0 100 L0 86 Q18 72 36 68 L64 68 Q82 72 100 86 L100 100 Z" fill="#5353b2"/><path d="M34 68 Q50 86 66 68 L62 58 L38 58 Z" fill="#fce8ae"/><ellipse cx="50" cy="44" rx="17" ry="22" fill="#fffbe6"/><ellipse cx="32" cy="46" rx="4" ry="5" fill="#fffbe6"/><ellipse cx="68" cy="46" rx="4" ry="5" fill="#fffbe6"/><path d="M32 42 Q28 14 52 12 Q74 14 70 38 L66 28 Q56 34 36 34 Z" fill="#fed73b"/></svg></div>
<div class="a t" style="left:556.50px;top:860.12px;width:135px;line-height:25px;height:25px;font-size:18px;color:#3c3c3c;font-weight:normal;text-align:center;">a123123</div>
<div class="a t" style="left:691.50px;top:861.12px;width:126px;line-height:25px;height:25px;font-size:18px;color:#3c3c3c;font-weight:normal;text-align:center;">都是</div>
<div class="a" style="left:831px;top:864.625px;width:57.6px;height:21.8px;background:#18bc9c;border-radius:3px"></div>
<div class="a t" style="left:831.20px;top:865.62px;width:57.6px;line-height:20px;height:20px;font-size:14px;color:#fff;font-weight:bold;text-align:center;">已认证</div>
<div class="a t" style="left:903.00px;top:860.12px;width:150px;line-height:25px;height:25px;font-size:18px;color:#3c3c3c;font-weight:normal;text-align:center;">514910.00</div>
<div class="a t" style="left:1053.75px;top:860.12px;width:98px;line-height:25px;height:25px;font-size:18px;color:#3c3c3c;font-weight:normal;text-align:center;">0</div>
<div class="a t" style="left:1152.25px;top:860.12px;width:96px;line-height:25px;height:25px;font-size:18px;color:#3c3c3c;font-weight:normal;text-align:center;">0.00</div>
<div class="a t" style="left:1248.50px;top:860.12px;width:79px;line-height:25px;height:25px;font-size:18px;color:#3c3c3c;font-weight:normal;text-align:center;">100</div>
<div class="a t" style="left:1327.50px;top:860.12px;width:78px;line-height:25px;height:25px;font-size:18px;color:#3c3c3c;font-weight:normal;text-align:center;">-</div>
<div class="a" style="left:1427px;top:864.525px;width:44px;height:21.9px;background:#0073b7;border-radius:3px"></div>
<div class="a t" style="left:1427.00px;top:865.52px;width:44px;line-height:20px;height:20px;font-size:14px;color:#fff;font-weight:bold;text-align:center;">离线</div>
<div class="a" style="left:1503.5px;top:859.62px;width:27.5px;height:28px;overflow:hidden"><span style="font-size:19px;line-height:26px;font-style:italic;color:#dd1144;border-bottom:1px dashed #0088cc;white-space:nowrap;display:inline-block;height:24.5px">Empty</span></div>
<div class="a" style="left:376.7px;top:948.3px;width:18.2px;height:18.6px;border:1.8px solid #959595;border-radius:3.5px;box-sizing:border-box;background:#fff"></div>
<div class="a t" style="left:407.00px;top:948.00px;width:52px;line-height:25px;height:25px;font-size:18px;color:#3c3c3c;font-weight:normal;text-align:center;">8</div>
<div class="a" style="left:488.3px;top:941.0px;width:38.5px;height:41px;border-radius:50%;overflow:hidden"><svg width="100%" height="100%" viewBox="0 0 100 100" preserveAspectRatio="none" style="display:block"><rect width="100" height="100" fill="#fe7b22"/><path d="M0 100 L0 92 L12 82 Q22 76 32 73.5 L69 73.5 Q79 76 89 82 L100 92 L100 100 Z" fill="#181818"/><path d="M32 73.5 L69 73.5 Q64 86 50.5 88 Q37 86 32 73.5 Z" fill="#874538"/><rect x="41" y="60" width="19.5" height="15" fill="#874538"/><path d="M32 40 Q31 27 40 24 L61 24 Q70 27 70 40 Q70 50 66 56 Q62 66 51 68 Q40 66 36 56 Q32 50 32 40 Z" fill="#965b4c"/><path d="M30.5 41 Q27 14 51 14 Q75 14 71.5 41 L68.5 40 Q68 28 51 28 Q34 28 33.5 40 Z" fill="#4b2820"/></svg></div>
<div class="a t" style="left:556.50px;top:948.00px;width:135px;line-height:25px;height:25px;font-size:18px;color:#3c3c3c;font-weight:normal;text-align:center;">123456</div>
<div class="a t" style="left:691.50px;top:949.00px;width:126px;line-height:25px;height:25px;font-size:18px;color:#3c3c3c;font-weight:normal;text-align:center;">进</div>
<div class="a" style="left:831px;top:952.5px;width:57.6px;height:21.8px;background:#18bc9c;border-radius:3px"></div>
<div class="a t" style="left:831.20px;top:953.50px;width:57.6px;line-height:20px;height:20px;font-size:14px;color:#fff;font-weight:bold;text-align:center;">已认证</div>
<div class="a t" style="left:903.00px;top:948.00px;width:150px;line-height:25px;height:25px;font-size:18px;color:#3c3c3c;font-weight:normal;text-align:center;">893123.35</div>
<div class="a t" style="left:1053.75px;top:948.00px;width:98px;line-height:25px;height:25px;font-size:18px;color:#3c3c3c;font-weight:normal;text-align:center;">0</div>
<div class="a t" style="left:1152.25px;top:948.00px;width:96px;line-height:25px;height:25px;font-size:18px;color:#3c3c3c;font-weight:normal;text-align:center;">0.00</div>
<div class="a t" style="left:1248.50px;top:948.00px;width:79px;line-height:25px;height:25px;font-size:18px;color:#3c3c3c;font-weight:normal;text-align:center;">100</div>
<div class="a" style="left:1427px;top:952.4px;width:44px;height:21.9px;background:#0073b7;border-radius:3px"></div>
<div class="a t" style="left:1427.00px;top:953.40px;width:44px;line-height:20px;height:20px;font-size:14px;color:#fff;font-weight:bold;text-align:center;">离线</div>
<div class="a" style="left:1503.5px;top:947.50px;width:27.5px;height:28px;overflow:hidden"><span style="font-size:19px;line-height:26px;font-style:italic;color:#dd1144;border-bottom:1px dashed #0088cc;white-space:nowrap;display:inline-block;height:24.5px">Empty</span></div>
<div class="a" style="left:376.7px;top:1036.175px;width:18.2px;height:18.6px;border:1.8px solid #959595;border-radius:3.5px;box-sizing:border-box;background:#fff"></div>
<div class="a t" style="left:407.00px;top:1035.88px;width:52px;line-height:25px;height:25px;font-size:18px;color:#3c3c3c;font-weight:normal;text-align:center;">6</div>
<div class="a" style="left:488.3px;top:1028.875px;width:38.5px;height:41px;border-radius:50%;overflow:hidden"><svg width="100%" height="100%" viewBox="0 0 100 100" preserveAspectRatio="none" style="display:block"><rect width="100" height="100" fill="#fe7b22"/><path d="M0 100 L0 92 L12 82 Q22 76 32 73.5 L69 73.5 Q79 76 89 82 L100 92 L100 100 Z" fill="#181818"/><path d="M32 73.5 L69 73.5 Q64 86 50.5 88 Q37 86 32 73.5 Z" fill="#874538"/><rect x="41" y="60" width="19.5" height="15" fill="#874538"/><path d="M32 40 Q31 27 40 24 L61 24 Q70 27 70 40 Q70 50 66 56 Q62 66 51 68 Q40 66 36 56 Q32 50 32 40 Z" fill="#965b4c"/><path d="M30.5 41 Q27 14 51 14 Q75 14 71.5 41 L68.5 40 Q68 28 51 28 Q34 28 33.5 40 Z" fill="#4b2820"/></svg></div>
<div class="a t" style="left:556.50px;top:1035.88px;width:135px;line-height:25px;height:25px;font-size:18px;color:#3c3c3c;font-weight:normal;text-align:center;">18386341231</div>
<div class="a t" style="left:691.50px;top:1035.88px;width:126px;line-height:25px;height:25px;font-size:18px;color:#3c3c3c;font-weight:normal;text-align:center;">214214</div>
<div class="a" style="left:831px;top:1040.375px;width:57.6px;height:21.8px;background:#2c3e50;border-radius:3px"></div>
<div class="a t" style="left:831.20px;top:1041.38px;width:57.6px;line-height:20px;height:20px;font-size:14px;color:#fff;font-weight:bold;text-align:center;">未提交</div>
<div class="a t" style="left:903.00px;top:1035.88px;width:150px;line-height:25px;height:25px;font-size:18px;color:#3c3c3c;font-weight:normal;text-align:center;">0.00</div>
<div class="a t" style="left:1053.75px;top:1035.88px;width:98px;line-height:25px;height:25px;font-size:18px;color:#3c3c3c;font-weight:normal;text-align:center;">0</div>
<div class="a t" style="left:1152.25px;top:1035.88px;width:96px;line-height:25px;height:25px;font-size:18px;color:#3c3c3c;font-weight:normal;text-align:center;">0.00</div>
<div class="a t" style="left:1248.50px;top:1035.88px;width:79px;line-height:25px;height:25px;font-size:18px;color:#3c3c3c;font-weight:normal;text-align:center;">100</div>
<div class="a t" style="left:1327.50px;top:1035.88px;width:78px;line-height:25px;height:25px;font-size:18px;color:#3c3c3c;font-weight:normal;text-align:center;">-</div>
<div class="a" style="left:1427px;top:1040.275px;width:44px;height:21.9px;background:#0073b7;border-radius:3px"></div>
<div class="a t" style="left:1427.00px;top:1041.28px;width:44px;line-height:20px;height:20px;font-size:14px;color:#fff;font-weight:bold;text-align:center;">离线</div>
<div class="a" style="left:1503.5px;top:1035.38px;width:27.5px;height:28px;overflow:hidden"><span style="font-size:19px;line-height:26px;font-style:italic;color:#dd1144;border-bottom:1px dashed #0088cc;white-space:nowrap;display:inline-block;height:24.5px">Empty</span></div>
<div class="a" style="left:376.7px;top:1124.05px;width:18.2px;height:18.6px;border:1.8px solid #959595;border-radius:3.5px;box-sizing:border-box;background:#fff"></div>
<div class="a t" style="left:407.00px;top:1123.75px;width:52px;line-height:25px;height:25px;font-size:18px;color:#3c3c3c;font-weight:normal;text-align:center;">5</div>
<div class="a" style="left:488px;top:1116.45px;width:39.5px;height:39.6px;border-radius:50%;overflow:hidden"><svg width="100%" height="100%" viewBox="0 0 100 100" preserveAspectRatio="none" style="display:block"><rect width="100" height="100" fill="#62cbcb"/><path d="M0 100 L0 88 Q18 70 38 66 L62 66 Q82 70 100 88 L100 100 Z" fill="#e9e9e9"/><path d="M36 66 L50 78 L64 66 L60 60 L40 60 Z" fill="#fff"/><rect x="41" y="54" width="18" height="12" fill="#f9d99a"/><ellipse cx="50" cy="43" rx="16" ry="20" fill="#fde7a4"/><path d="M30 44 Q27 12 50 12 Q74 12 70 44 Q66 30 54 30 Q40 32 32 46 Z" fill="#5a2921"/><path d="M46 72 L54 72 L57 100 L43 100 Z" fill="#4d57c0"/></svg></div>
<div class="a t" style="left:556.50px;top:1123.75px;width:135px;line-height:25px;height:25px;font-size:18px;color:#3c3c3c;font-weight:normal;text-align:center;">1888888888</div>
<div class="a t" style="left:691.50px;top:1123.75px;width:126px;line-height:25px;height:25px;font-size:18px;color:#3c3c3c;font-weight:normal;text-align:center;">1888888888</div>
<div class="a" style="left:831px;top:1128.25px;width:57.6px;height:21.8px;background:#2c3e50;border-radius:3px"></div>
<div class="a t" style="left:831.20px;top:1129.25px;width:57.6px;line-height:20px;height:20px;font-size:14px;color:#fff;font-weight:bold;text-align:center;">未提交</div>
<div class="a t" style="left:903.00px;top:1123.75px;width:150px;line-height:25px;height:25px;font-size:18px;color:#3c3c3c;font-weight:normal;text-align:center;">0.00</div>
<div class="a t" style="left:1053.75px;top:1123.75px;width:98px;line-height:25px;height:25px;font-size:18px;color:#3c3c3c;font-weight:normal;text-align:center;">0</div>
<div class="a t" style="left:1152.25px;top:1123.75px;width:96px;line-height:25px;height:25px;font-size:18px;color:#3c3c3c;font-weight:normal;text-align:center;">0.00</div>
<div class="a t" style="left:1248.50px;top:1123.75px;width:79px;line-height:25px;height:25px;font-size:18px;color:#3c3c3c;font-weight:normal;text-align:center;">100</div>
<div class="a" style="left:1427px;top:1128.15px;width:44px;height:21.9px;background:#0073b7;border-radius:3px"></div>
<div class="a t" style="left:1427.00px;top:1129.15px;width:44px;line-height:20px;height:20px;font-size:14px;color:#fff;font-weight:bold;text-align:center;">离线</div>
<div class="a" style="left:1503.5px;top:1123.25px;width:27.5px;height:28px;overflow:hidden"><span style="font-size:19px;line-height:26px;font-style:italic;color:#dd1144;border-bottom:1px dashed #0088cc;white-space:nowrap;display:inline-block;height:24.5px">Empty</span></div>
<div class="a" style="left:376.7px;top:1211.925px;width:18.2px;height:18.6px;border:1.8px solid #959595;border-radius:3.5px;box-sizing:border-box;background:#fff"></div>
<div class="a t" style="left:407.00px;top:1211.62px;width:52px;line-height:25px;height:25px;font-size:18px;color:#3c3c3c;font-weight:normal;text-align:center;">4</div>
<div class="a" style="left:488px;top:1204.325px;width:39.5px;height:39.6px;border-radius:50%;overflow:hidden"><svg width="100%" height="100%" viewBox="0 0 100 100" preserveAspectRatio="none" style="display:block"><rect width="100" height="100" fill="#5291fd"/><path d="M0 100 L0 86 Q18 72 36 68 L64 68 Q82 72 100 86 L100 100 Z" fill="#5353b2"/><path d="M34 68 Q50 86 66 68 L62 58 L38 58 Z" fill="#fce8ae"/><ellipse cx="50" cy="44" rx="17" ry="22" fill="#fffbe6"/><ellipse cx="32" cy="46" rx="4" ry="5" fill="#fffbe6"/><ellipse cx="68" cy="46" rx="4" ry="5" fill="#fffbe6"/><path d="M32 42 Q28 14 52 12 Q74 14 70 38 L66 28 Q56 34 36 34 Z" fill="#fed73b"/></svg></div>
<div class="a t" style="left:556.50px;top:1211.62px;width:135px;line-height:25px;height:25px;font-size:18px;color:#3c3c3c;font-weight:normal;text-align:center;">z6666</div>
<div class="a t" style="left:691.50px;top:1211.62px;width:126px;line-height:25px;height:25px;font-size:18px;color:#3c3c3c;font-weight:normal;text-align:center;">adawdaw</div>
<div class="a" style="left:831px;top:1216.125px;width:57.6px;height:21.8px;background:#18bc9c;border-radius:3px"></div>
<div class="a t" style="left:831.20px;top:1217.12px;width:57.6px;line-height:20px;height:20px;font-size:14px;color:#fff;font-weight:bold;text-align:center;">已认证</div>
<div class="a t" style="left:903.00px;top:1211.62px;width:150px;line-height:25px;height:25px;font-size:18px;color:#3c3c3c;font-weight:normal;text-align:center;">6934008003.75</div>
<div class="a t" style="left:1053.75px;top:1211.62px;width:98px;line-height:25px;height:25px;font-size:18px;color:#3c3c3c;font-weight:normal;text-align:center;">0</div>
<div class="a t" style="left:1152.25px;top:1211.62px;width:96px;line-height:25px;height:25px;font-size:18px;color:#3c3c3c;font-weight:normal;text-align:center;">0.00</div>
<div class="a t" style="left:1248.50px;top:1211.62px;width:79px;line-height:25px;height:25px;font-size:18px;color:#3c3c3c;font-weight:normal;text-align:center;">100</div>
<div class="a" style="left:1427px;top:1216.025px;width:44px;height:21.9px;background:#0073b7;border-radius:3px"></div>
<div class="a t" style="left:1427.00px;top:1217.03px;width:44px;line-height:20px;height:20px;font-size:14px;color:#fff;font-weight:bold;text-align:center;">离线</div>
<div class="a" style="left:1503.5px;top:1211.12px;width:27.5px;height:28px;overflow:hidden"><span style="font-size:19px;line-height:26px;font-style:italic;color:#dd1144;border-bottom:1px dashed #0088cc;white-space:nowrap;display:inline-block;height:24.5px">Empty</span></div>
<div class="a" style="left:1531.3px;top:508.5px;width:808.7px;height:759.5px;background:#fff;box-shadow:0 0 10px rgba(0,0,0,.12)"></div>
<div class="a" style="left:1531.3px;top:565.0px;width:808.7px;height:87.875px;background:#f9f9f9"></div>
<div class="a" style="left:1531.3px;top:740.75px;width:808.7px;height:87.875px;background:#f9f9f9"></div>
<div class="a" style="left:1531.3px;top:916.5px;width:808.7px;height:87.875px;background:#f9f9f9"></div>
<div class="a" style="left:1531.3px;top:1092.25px;width:808.7px;height:87.875px;background:#f9f9f9"></div>
<div class="a" style="left:1531.3px;top:563.5px;width:808.7px;height:2px;background:#ebebeb"></div>
<div class="a t b" style="left:1886.00px;top:525.50px;width:100px;line-height:24px;height:24px;font-size:17.5px;color:#333;font-weight:bold;text-align:center;">操作</div>
<div class="a btn" style="left:1543.18px;top:595.70px;width:67.5px;height:27.5px;background:#18bc9c"><svg width="16.5" height="13" viewBox="0 0 100 100" preserveAspectRatio="none" fill="#fff" style="display:block;flex:none"><use href="#list"/></svg><span style="font-size:16px;line-height:20px;color:#fff;white-space:nowrap;position:relative;top:0.8px">详情</span></div>
<div class="a btn" style="left:1615.95px;top:595.70px;width:65.3px;height:27.5px;background:#f39c12"><svg width="15" height="13" viewBox="0 0 100 100" preserveAspectRatio="none" fill="#fff" style="display:block;flex:none"><use href="#cart"/></svg><span style="font-size:16px;line-height:20px;color:#fff;white-space:nowrap;position:relative;top:0.8px">分数</span></div>
<div class="a btn" style="left:1686.52px;top:595.70px;width:96.8px;height:27.5px;background:#3498db"><svg width="15" height="13" viewBox="0 0 100 100" preserveAspectRatio="none" fill="#fff" style="display:block;flex:none"><use href="#cart"/></svg><span style="font-size:16px;line-height:20px;color:#fff;white-space:nowrap;position:relative;top:0.8px">实名认证</span></div>
<div class="a btn" style="left:1788.59px;top:595.70px;width:96.5px;height:27.5px;background:#f39c12"><svg width="15" height="13" viewBox="0 0 100 100" preserveAspectRatio="none" fill="#fff" style="display:block;flex:none"><use href="#cart"/></svg><span style="font-size:16px;line-height:20px;color:#fff;white-space:nowrap;position:relative;top:0.8px">冻结资金</span></div>
<div class="a btn" style="left:1890.36px;top:595.70px;width:80.7px;height:27.5px;background:#f39c12"><svg width="15" height="13" viewBox="0 0 100 100" preserveAspectRatio="none" fill="#fff" style="display:block;flex:none"><use href="#cart"/></svg><span style="font-size:16px;line-height:20px;color:#fff;white-space:nowrap;position:relative;top:0.8px">信誉分</span></div>
<div class="a btn" style="left:1976.33px;top:595.70px;width:68.6px;height:27.5px;background:#3498db"><svg width="16.5" height="13" viewBox="0 0 100 100" preserveAspectRatio="none" fill="#fff" style="display:block;flex:none"><use href="#area"/></svg><span style="font-size:16px;line-height:20px;color:#fff;white-space:nowrap;position:relative;top:0.8px">报表</span></div>
<div class="a btn" style="left:2050.20px;top:595.70px;width:109px;height:27.5px;background:#e74c3c"><svg width="12.5" height="14" viewBox="0 0 100 100" preserveAspectRatio="none" fill="#fff" style="display:block;flex:none"><use href="#user"/></svg><span style="font-size:16px;line-height:20px;color:#fff;white-space:nowrap;position:relative;top:0.8px">设置黑名单</span></div>
<div class="a btn" style="left:2164.47px;top:595.70px;width:95.7px;height:27.5px;background:#18bc9c"><svg width="13" height="15" viewBox="0 0 100 100" preserveAspectRatio="none" fill="#fff" style="display:block;flex:none"><use href="#secret"/></svg><span style="font-size:16px;line-height:20px;color:#fff;white-space:nowrap;position:relative;top:0.8px">取消冻结</span></div>
<div class="a btn" style="left:2265.44px;top:595.70px;width:29px;height:27.5px;background:#18bc9c"><svg width="16" height="16" viewBox="0 0 100 100" preserveAspectRatio="none" fill="#fff" style="display:block;flex:none"><use href="#pencil"/></svg></div>
<div class="a btn" style="left:2299.71px;top:595.70px;width:28.3px;height:27.5px;background:#e74c3c"><svg width="12" height="14.5" viewBox="0 0 100 100" preserveAspectRatio="none" fill="#fff" style="display:block;flex:none"><use href="#trash"/></svg></div>
<div class="a btn" style="left:1560.28px;top:683.57px;width:67px;height:27.5px;background:#18bc9c"><svg width="16.5" height="13" viewBox="0 0 100 100" preserveAspectRatio="none" fill="#fff" style="display:block;flex:none"><use href="#list"/></svg><span style="font-size:16px;line-height:20px;color:#fff;white-space:nowrap;position:relative;top:0.8px">详情</span></div>
<div class="a btn" style="left:1632.55px;top:683.57px;width:66px;height:27.5px;background:#f39c12"><svg width="15" height="13" viewBox="0 0 100 100" preserveAspectRatio="none" fill="#fff" style="display:block;flex:none"><use href="#cart"/></svg><span style="font-size:16px;line-height:20px;color:#fff;white-space:nowrap;position:relative;top:0.8px">分数</span></div>
<div class="a btn" style="left:1703.82px;top:683.57px;width:96.8px;height:27.5px;background:#3498db"><svg width="15" height="13" viewBox="0 0 100 100" preserveAspectRatio="none" fill="#fff" style="display:block;flex:none"><use href="#cart"/></svg><span style="font-size:16px;line-height:20px;color:#fff;white-space:nowrap;position:relative;top:0.8px">实名认证</span></div>
<div class="a btn" style="left:1805.89px;top:683.57px;width:96px;height:27.5px;background:#f39c12"><svg width="15" height="13" viewBox="0 0 100 100" preserveAspectRatio="none" fill="#fff" style="display:block;flex:none"><use href="#cart"/></svg><span style="font-size:16px;line-height:20px;color:#fff;white-space:nowrap;position:relative;top:0.8px">冻结资金</span></div>
<div class="a btn" style="left:1907.16px;top:683.57px;width:81px;height:27.5px;background:#f39c12"><svg width="15" height="13" viewBox="0 0 100 100" preserveAspectRatio="none" fill="#fff" style="display:block;flex:none"><use href="#cart"/></svg><span style="font-size:16px;line-height:20px;color:#fff;white-space:nowrap;position:relative;top:0.8px">信誉分</span></div>
<div class="a btn" style="left:1993.43px;top:683.57px;width:68.6px;height:27.5px;background:#3498db"><svg width="16.5" height="13" viewBox="0 0 100 100" preserveAspectRatio="none" fill="#fff" style="display:block;flex:none"><use href="#area"/></svg><span style="font-size:16px;line-height:20px;color:#fff;white-space:nowrap;position:relative;top:0.8px">报表</span></div>
<div class="a btn" style="left:2067.30px;top:683.57px;width:108.7px;height:27.5px;background:#e74c3c"><svg width="12.5" height="14" viewBox="0 0 100 100" preserveAspectRatio="none" fill="#fff" style="display:block;flex:none"><use href="#user"/></svg><span style="font-size:16px;line-height:20px;color:#fff;white-space:nowrap;position:relative;top:0.8px">设置黑名单</span></div>
<div class="a btn" style="left:2181.27px;top:683.57px;width:62px;height:27.5px;background:#e74c3c"><svg width="12.5" height="14" viewBox="0 0 100 100" preserveAspectRatio="none" fill="#fff" style="display:block;flex:none"><use href="#user"/></svg><span style="font-size:16px;line-height:20px;color:#fff;white-space:nowrap;position:relative;top:0.8px">冻结</span></div>
<div class="a btn" style="left:2248.54px;top:683.57px;width:28.7px;height:27.5px;background:#18bc9c"><svg width="16" height="16" viewBox="0 0 100 100" preserveAspectRatio="none" fill="#fff" style="display:block;flex:none"><use href="#pencil"/></svg></div>
<div class="a btn" style="left:2282.51px;top:683.57px;width:28.4px;height:27.5px;background:#e74c3c"><svg width="12" height="14.5" viewBox="0 0 100 100" preserveAspectRatio="none" fill="#fff" style="display:block;flex:none"><use href="#trash"/></svg></div>
<div class="a btn" style="left:1560.28px;top:771.45px;width:67px;height:27.5px;background:#18bc9c"><svg width="16.5" height="13" viewBox="0 0 100 100" preserveAspectRatio="none" fill="#fff" style="display:block;flex:none"><use href="#list"/></svg><span style="font-size:16px;line-height:20px;color:#fff;white-space:nowrap;position:relative;top:0.8px">详情</span></div>
<div class="a btn" style="left:1632.55px;top:771.45px;width:66px;height:27.5px;background:#f39c12"><svg width="15" height="13" viewBox="0 0 100 100" preserveAspectRatio="none" fill="#fff" style="display:block;flex:none"><use href="#cart"/></svg><span style="font-size:16px;line-height:20px;color:#fff;white-space:nowrap;position:relative;top:0.8px">分数</span></div>
<div class="a btn" style="left:1703.82px;top:771.45px;width:96.8px;height:27.5px;background:#3498db"><svg width="15" height="13" viewBox="0 0 100 100" preserveAspectRatio="none" fill="#fff" style="display:block;flex:none"><use href="#cart"/></svg><span style="font-size:16px;line-height:20px;color:#fff;white-space:nowrap;position:relative;top:0.8px">实名认证</span></div>
<div class="a btn" style="left:1805.89px;top:771.45px;width:96px;height:27.5px;background:#f39c12"><svg width="15" height="13" viewBox="0 0 100 100" preserveAspectRatio="none" fill="#fff" style="display:block;flex:none"><use href="#cart"/></svg><span style="font-size:16px;line-height:20px;color:#fff;white-space:nowrap;position:relative;top:0.8px">冻结资金</span></div>
<div class="a btn" style="left:1907.16px;top:771.45px;width:81px;height:27.5px;background:#f39c12"><svg width="15" height="13" viewBox="0 0 100 100" preserveAspectRatio="none" fill="#fff" style="display:block;flex:none"><use href="#cart"/></svg><span style="font-size:16px;line-height:20px;color:#fff;white-space:nowrap;position:relative;top:0.8px">信誉分</span></div>
<div class="a btn" style="left:1993.43px;top:771.45px;width:68.6px;height:27.5px;background:#3498db"><svg width="16.5" height="13" viewBox="0 0 100 100" preserveAspectRatio="none" fill="#fff" style="display:block;flex:none"><use href="#area"/></svg><span style="font-size:16px;line-height:20px;color:#fff;white-space:nowrap;position:relative;top:0.8px">报表</span></div>
<div class="a btn" style="left:2067.30px;top:771.45px;width:108.7px;height:27.5px;background:#e74c3c"><svg width="12.5" height="14" viewBox="0 0 100 100" preserveAspectRatio="none" fill="#fff" style="display:block;flex:none"><use href="#user"/></svg><span style="font-size:16px;line-height:20px;color:#fff;white-space:nowrap;position:relative;top:0.8px">设置黑名单</span></div>
<div class="a btn" style="left:2181.27px;top:771.45px;width:62px;height:27.5px;background:#e74c3c"><svg width="12.5" height="14" viewBox="0 0 100 100" preserveAspectRatio="none" fill="#fff" style="display:block;flex:none"><use href="#user"/></svg><span style="font-size:16px;line-height:20px;color:#fff;white-space:nowrap;position:relative;top:0.8px">冻结</span></div>
<div class="a btn" style="left:2248.54px;top:771.45px;width:28.7px;height:27.5px;background:#18bc9c"><svg width="16" height="16" viewBox="0 0 100 100" preserveAspectRatio="none" fill="#fff" style="display:block;flex:none"><use href="#pencil"/></svg></div>
<div class="a btn" style="left:2282.51px;top:771.45px;width:28.4px;height:27.5px;background:#e74c3c"><svg width="12" height="14.5" viewBox="0 0 100 100" preserveAspectRatio="none" fill="#fff" style="display:block;flex:none"><use href="#trash"/></svg></div>
<div class="a btn" style="left:1560.28px;top:859.32px;width:67px;height:27.5px;background:#18bc9c"><svg width="16.5" height="13" viewBox="0 0 100 100" preserveAspectRatio="none" fill="#fff" style="display:block;flex:none"><use href="#list"/></svg><span style="font-size:16px;line-height:20px;color:#fff;white-space:nowrap;position:relative;top:0.8px">详情</span></div>
<div class="a btn" style="left:1632.55px;top:859.32px;width:66px;height:27.5px;background:#f39c12"><svg width="15" height="13" viewBox="0 0 100 100" preserveAspectRatio="none" fill="#fff" style="display:block;flex:none"><use href="#cart"/></svg><span style="font-size:16px;line-height:20px;color:#fff;white-space:nowrap;position:relative;top:0.8px">分数</span></div>
<div class="a btn" style="left:1703.82px;top:859.32px;width:96.8px;height:27.5px;background:#3498db"><svg width="15" height="13" viewBox="0 0 100 100" preserveAspectRatio="none" fill="#fff" style="display:block;flex:none"><use href="#cart"/></svg><span style="font-size:16px;line-height:20px;color:#fff;white-space:nowrap;position:relative;top:0.8px">实名认证</span></div>
<div class="a btn" style="left:1805.89px;top:859.32px;width:96px;height:27.5px;background:#f39c12"><svg width="15" height="13" viewBox="0 0 100 100" preserveAspectRatio="none" fill="#fff" style="display:block;flex:none"><use href="#cart"/></svg><span style="font-size:16px;line-height:20px;color:#fff;white-space:nowrap;position:relative;top:0.8px">冻结资金</span></div>
<div class="a btn" style="left:1907.16px;top:859.32px;width:81px;height:27.5px;background:#f39c12"><svg width="15" height="13" viewBox="0 0 100 100" preserveAspectRatio="none" fill="#fff" style="display:block;flex:none"><use href="#cart"/></svg><span style="font-size:16px;line-height:20px;color:#fff;white-space:nowrap;position:relative;top:0.8px">信誉分</span></div>
<div class="a btn" style="left:1993.43px;top:859.32px;width:68.6px;height:27.5px;background:#3498db"><svg width="16.5" height="13" viewBox="0 0 100 100" preserveAspectRatio="none" fill="#fff" style="display:block;flex:none"><use href="#area"/></svg><span style="font-size:16px;line-height:20px;color:#fff;white-space:nowrap;position:relative;top:0.8px">报表</span></div>
<div class="a btn" style="left:2067.30px;top:859.32px;width:108.7px;height:27.5px;background:#e74c3c"><svg width="12.5" height="14" viewBox="0 0 100 100" preserveAspectRatio="none" fill="#fff" style="display:block;flex:none"><use href="#user"/></svg><span style="font-size:16px;line-height:20px;color:#fff;white-space:nowrap;position:relative;top:0.8px">设置黑名单</span></div>
<div class="a btn" style="left:2181.27px;top:859.32px;width:62px;height:27.5px;background:#e74c3c"><svg width="12.5" height="14" viewBox="0 0 100 100" preserveAspectRatio="none" fill="#fff" style="display:block;flex:none"><use href="#user"/></svg><span style="font-size:16px;line-height:20px;color:#fff;white-space:nowrap;position:relative;top:0.8px">冻结</span></div>
<div class="a btn" style="left:2248.54px;top:859.32px;width:28.7px;height:27.5px;background:#18bc9c"><svg width="16" height="16" viewBox="0 0 100 100" preserveAspectRatio="none" fill="#fff" style="display:block;flex:none"><use href="#pencil"/></svg></div>
<div class="a btn" style="left:2282.51px;top:859.32px;width:28.4px;height:27.5px;background:#e74c3c"><svg width="12" height="14.5" viewBox="0 0 100 100" preserveAspectRatio="none" fill="#fff" style="display:block;flex:none"><use href="#trash"/></svg></div>
<div class="a btn" style="left:1560.28px;top:947.20px;width:67px;height:27.5px;background:#18bc9c"><svg width="16.5" height="13" viewBox="0 0 100 100" preserveAspectRatio="none" fill="#fff" style="display:block;flex:none"><use href="#list"/></svg><span style="font-size:16px;line-height:20px;color:#fff;white-space:nowrap;position:relative;top:0.8px">详情</span></div>
<div class="a btn" style="left:1632.55px;top:947.20px;width:66px;height:27.5px;background:#f39c12"><svg width="15" height="13" viewBox="0 0 100 100" preserveAspectRatio="none" fill="#fff" style="display:block;flex:none"><use href="#cart"/></svg><span style="font-size:16px;line-height:20px;color:#fff;white-space:nowrap;position:relative;top:0.8px">分数</span></div>
<div class="a btn" style="left:1703.82px;top:947.20px;width:96.8px;height:27.5px;background:#3498db"><svg width="15" height="13" viewBox="0 0 100 100" preserveAspectRatio="none" fill="#fff" style="display:block;flex:none"><use href="#cart"/></svg><span style="font-size:16px;line-height:20px;color:#fff;white-space:nowrap;position:relative;top:0.8px">实名认证</span></div>
<div class="a btn" style="left:1805.89px;top:947.20px;width:96px;height:27.5px;background:#f39c12"><svg width="15" height="13" viewBox="0 0 100 100" preserveAspectRatio="none" fill="#fff" style="display:block;flex:none"><use href="#cart"/></svg><span style="font-size:16px;line-height:20px;color:#fff;white-space:nowrap;position:relative;top:0.8px">冻结资金</span></div>
<div class="a btn" style="left:1907.16px;top:947.20px;width:81px;height:27.5px;background:#f39c12"><svg width="15" height="13" viewBox="0 0 100 100" preserveAspectRatio="none" fill="#fff" style="display:block;flex:none"><use href="#cart"/></svg><span style="font-size:16px;line-height:20px;color:#fff;white-space:nowrap;position:relative;top:0.8px">信誉分</span></div>
<div class="a btn" style="left:1993.43px;top:947.20px;width:68.6px;height:27.5px;background:#3498db"><svg width="16.5" height="13" viewBox="0 0 100 100" preserveAspectRatio="none" fill="#fff" style="display:block;flex:none"><use href="#area"/></svg><span style="font-size:16px;line-height:20px;color:#fff;white-space:nowrap;position:relative;top:0.8px">报表</span></div>
<div class="a btn" style="left:2067.30px;top:947.20px;width:108.7px;height:27.5px;background:#e74c3c"><svg width="12.5" height="14" viewBox="0 0 100 100" preserveAspectRatio="none" fill="#fff" style="display:block;flex:none"><use href="#user"/></svg><span style="font-size:16px;line-height:20px;color:#fff;white-space:nowrap;position:relative;top:0.8px">设置黑名单</span></div>
<div class="a btn" style="left:2181.27px;top:947.20px;width:62px;height:27.5px;background:#e74c3c"><svg width="12.5" height="14" viewBox="0 0 100 100" preserveAspectRatio="none" fill="#fff" style="display:block;flex:none"><use href="#user"/></svg><span style="font-size:16px;line-height:20px;color:#fff;white-space:nowrap;position:relative;top:0.8px">冻结</span></div>
<div class="a btn" style="left:2248.54px;top:947.20px;width:28.7px;height:27.5px;background:#18bc9c"><svg width="16" height="16" viewBox="0 0 100 100" preserveAspectRatio="none" fill="#fff" style="display:block;flex:none"><use href="#pencil"/></svg></div>
<div class="a btn" style="left:2282.51px;top:947.20px;width:28.4px;height:27.5px;background:#e74c3c"><svg width="12" height="14.5" viewBox="0 0 100 100" preserveAspectRatio="none" fill="#fff" style="display:block;flex:none"><use href="#trash"/></svg></div>
<div class="a btn" style="left:1560.28px;top:1035.08px;width:67px;height:27.5px;background:#18bc9c"><svg width="16.5" height="13" viewBox="0 0 100 100" preserveAspectRatio="none" fill="#fff" style="display:block;flex:none"><use href="#list"/></svg><span style="font-size:16px;line-height:20px;color:#fff;white-space:nowrap;position:relative;top:0.8px">详情</span></div>
<div class="a btn" style="left:1632.55px;top:1035.08px;width:66px;height:27.5px;background:#f39c12"><svg width="15" height="13" viewBox="0 0 100 100" preserveAspectRatio="none" fill="#fff" style="display:block;flex:none"><use href="#cart"/></svg><span style="font-size:16px;line-height:20px;color:#fff;white-space:nowrap;position:relative;top:0.8px">分数</span></div>
<div class="a btn" style="left:1703.82px;top:1035.08px;width:96.8px;height:27.5px;background:#3498db"><svg width="15" height="13" viewBox="0 0 100 100" preserveAspectRatio="none" fill="#fff" style="display:block;flex:none"><use href="#cart"/></svg><span style="font-size:16px;line-height:20px;color:#fff;white-space:nowrap;position:relative;top:0.8px">实名认证</span></div>
<div class="a btn" style="left:1805.89px;top:1035.08px;width:96px;height:27.5px;background:#f39c12"><svg width="15" height="13" viewBox="0 0 100 100" preserveAspectRatio="none" fill="#fff" style="display:block;flex:none"><use href="#cart"/></svg><span style="font-size:16px;line-height:20px;color:#fff;white-space:nowrap;position:relative;top:0.8px">冻结资金</span></div>
<div class="a btn" style="left:1907.16px;top:1035.08px;width:81px;height:27.5px;background:#f39c12"><svg width="15" height="13" viewBox="0 0 100 100" preserveAspectRatio="none" fill="#fff" style="display:block;flex:none"><use href="#cart"/></svg><span style="font-size:16px;line-height:20px;color:#fff;white-space:nowrap;position:relative;top:0.8px">信誉分</span></div>
<div class="a btn" style="left:1993.43px;top:1035.08px;width:68.6px;height:27.5px;background:#3498db"><svg width="16.5" height="13" viewBox="0 0 100 100" preserveAspectRatio="none" fill="#fff" style="display:block;flex:none"><use href="#area"/></svg><span style="font-size:16px;line-height:20px;color:#fff;white-space:nowrap;position:relative;top:0.8px">报表</span></div>
<div class="a btn" style="left:2067.30px;top:1035.08px;width:108.7px;height:27.5px;background:#e74c3c"><svg width="12.5" height="14" viewBox="0 0 100 100" preserveAspectRatio="none" fill="#fff" style="display:block;flex:none"><use href="#user"/></svg><span style="font-size:16px;line-height:20px;color:#fff;white-space:nowrap;position:relative;top:0.8px">设置黑名单</span></div>
<div class="a btn" style="left:2181.27px;top:1035.08px;width:62px;height:27.5px;background:#e74c3c"><svg width="12.5" height="14" viewBox="0 0 100 100" preserveAspectRatio="none" fill="#fff" style="display:block;flex:none"><use href="#user"/></svg><span style="font-size:16px;line-height:20px;color:#fff;white-space:nowrap;position:relative;top:0.8px">冻结</span></div>
<div class="a btn" style="left:2248.54px;top:1035.08px;width:28.7px;height:27.5px;background:#18bc9c"><svg width="16" height="16" viewBox="0 0 100 100" preserveAspectRatio="none" fill="#fff" style="display:block;flex:none"><use href="#pencil"/></svg></div>
<div class="a btn" style="left:2282.51px;top:1035.08px;width:28.4px;height:27.5px;background:#e74c3c"><svg width="12" height="14.5" viewBox="0 0 100 100" preserveAspectRatio="none" fill="#fff" style="display:block;flex:none"><use href="#trash"/></svg></div>
<div class="a btn" style="left:1560.28px;top:1122.95px;width:67px;height:27.5px;background:#18bc9c"><svg width="16.5" height="13" viewBox="0 0 100 100" preserveAspectRatio="none" fill="#fff" style="display:block;flex:none"><use href="#list"/></svg><span style="font-size:16px;line-height:20px;color:#fff;white-space:nowrap;position:relative;top:0.8px">详情</span></div>
<div class="a btn" style="left:1632.55px;top:1122.95px;width:66px;height:27.5px;background:#f39c12"><svg width="15" height="13" viewBox="0 0 100 100" preserveAspectRatio="none" fill="#fff" style="display:block;flex:none"><use href="#cart"/></svg><span style="font-size:16px;line-height:20px;color:#fff;white-space:nowrap;position:relative;top:0.8px">分数</span></div>
<div class="a btn" style="left:1703.82px;top:1122.95px;width:96.8px;height:27.5px;background:#3498db"><svg width="15" height="13" viewBox="0 0 100 100" preserveAspectRatio="none" fill="#fff" style="display:block;flex:none"><use href="#cart"/></svg><span style="font-size:16px;line-height:20px;color:#fff;white-space:nowrap;position:relative;top:0.8px">实名认证</span></div>
<div class="a btn" style="left:1805.89px;top:1122.95px;width:96px;height:27.5px;background:#f39c12"><svg width="15" height="13" viewBox="0 0 100 100" preserveAspectRatio="none" fill="#fff" style="display:block;flex:none"><use href="#cart"/></svg><span style="font-size:16px;line-height:20px;color:#fff;white-space:nowrap;position:relative;top:0.8px">冻结资金</span></div>
<div class="a btn" style="left:1907.16px;top:1122.95px;width:81px;height:27.5px;background:#f39c12"><svg width="15" height="13" viewBox="0 0 100 100" preserveAspectRatio="none" fill="#fff" style="display:block;flex:none"><use href="#cart"/></svg><span style="font-size:16px;line-height:20px;color:#fff;white-space:nowrap;position:relative;top:0.8px">信誉分</span></div>
<div class="a btn" style="left:1993.43px;top:1122.95px;width:68.6px;height:27.5px;background:#3498db"><svg width="16.5" height="13" viewBox="0 0 100 100" preserveAspectRatio="none" fill="#fff" style="display:block;flex:none"><use href="#area"/></svg><span style="font-size:16px;line-height:20px;color:#fff;white-space:nowrap;position:relative;top:0.8px">报表</span></div>
<div class="a btn" style="left:2067.30px;top:1122.95px;width:108.7px;height:27.5px;background:#e74c3c"><svg width="12.5" height="14" viewBox="0 0 100 100" preserveAspectRatio="none" fill="#fff" style="display:block;flex:none"><use href="#user"/></svg><span style="font-size:16px;line-height:20px;color:#fff;white-space:nowrap;position:relative;top:0.8px">设置黑名单</span></div>
<div class="a btn" style="left:2181.27px;top:1122.95px;width:62px;height:27.5px;background:#e74c3c"><svg width="12.5" height="14" viewBox="0 0 100 100" preserveAspectRatio="none" fill="#fff" style="display:block;flex:none"><use href="#user"/></svg><span style="font-size:16px;line-height:20px;color:#fff;white-space:nowrap;position:relative;top:0.8px">冻结</span></div>
<div class="a btn" style="left:2248.54px;top:1122.95px;width:28.7px;height:27.5px;background:#18bc9c"><svg width="16" height="16" viewBox="0 0 100 100" preserveAspectRatio="none" fill="#fff" style="display:block;flex:none"><use href="#pencil"/></svg></div>
<div class="a btn" style="left:2282.51px;top:1122.95px;width:28.4px;height:27.5px;background:#e74c3c"><svg width="12" height="14.5" viewBox="0 0 100 100" preserveAspectRatio="none" fill="#fff" style="display:block;flex:none"><use href="#trash"/></svg></div>
<div class="a btn" style="left:1560.28px;top:1210.83px;width:67px;height:27.5px;background:#18bc9c"><svg width="16.5" height="13" viewBox="0 0 100 100" preserveAspectRatio="none" fill="#fff" style="display:block;flex:none"><use href="#list"/></svg><span style="font-size:16px;line-height:20px;color:#fff;white-space:nowrap;position:relative;top:0.8px">详情</span></div>
<div class="a btn" style="left:1632.55px;top:1210.83px;width:66px;height:27.5px;background:#f39c12"><svg width="15" height="13" viewBox="0 0 100 100" preserveAspectRatio="none" fill="#fff" style="display:block;flex:none"><use href="#cart"/></svg><span style="font-size:16px;line-height:20px;color:#fff;white-space:nowrap;position:relative;top:0.8px">分数</span></div>
<div class="a btn" style="left:1703.82px;top:1210.83px;width:96.8px;height:27.5px;background:#3498db"><svg width="15" height="13" viewBox="0 0 100 100" preserveAspectRatio="none" fill="#fff" style="display:block;flex:none"><use href="#cart"/></svg><span style="font-size:16px;line-height:20px;color:#fff;white-space:nowrap;position:relative;top:0.8px">实名认证</span></div>
<div class="a btn" style="left:1805.89px;top:1210.83px;width:96px;height:27.5px;background:#f39c12"><svg width="15" height="13" viewBox="0 0 100 100" preserveAspectRatio="none" fill="#fff" style="display:block;flex:none"><use href="#cart"/></svg><span style="font-size:16px;line-height:20px;color:#fff;white-space:nowrap;position:relative;top:0.8px">冻结资金</span></div>
<div class="a btn" style="left:1907.16px;top:1210.83px;width:81px;height:27.5px;background:#f39c12"><svg width="15" height="13" viewBox="0 0 100 100" preserveAspectRatio="none" fill="#fff" style="display:block;flex:none"><use href="#cart"/></svg><span style="font-size:16px;line-height:20px;color:#fff;white-space:nowrap;position:relative;top:0.8px">信誉分</span></div>
<div class="a btn" style="left:1993.43px;top:1210.83px;width:68.6px;height:27.5px;background:#3498db"><svg width="16.5" height="13" viewBox="0 0 100 100" preserveAspectRatio="none" fill="#fff" style="display:block;flex:none"><use href="#area"/></svg><span style="font-size:16px;line-height:20px;color:#fff;white-space:nowrap;position:relative;top:0.8px">报表</span></div>
<div class="a btn" style="left:2067.30px;top:1210.83px;width:108.7px;height:27.5px;background:#e74c3c"><svg width="12.5" height="14" viewBox="0 0 100 100" preserveAspectRatio="none" fill="#fff" style="display:block;flex:none"><use href="#user"/></svg><span style="font-size:16px;line-height:20px;color:#fff;white-space:nowrap;position:relative;top:0.8px">设置黑名单</span></div>
<div class="a btn" style="left:2181.27px;top:1210.83px;width:62px;height:27.5px;background:#e74c3c"><svg width="12.5" height="14" viewBox="0 0 100 100" preserveAspectRatio="none" fill="#fff" style="display:block;flex:none"><use href="#user"/></svg><span style="font-size:16px;line-height:20px;color:#fff;white-space:nowrap;position:relative;top:0.8px">冻结</span></div>
<div class="a btn" style="left:2248.54px;top:1210.83px;width:28.7px;height:27.5px;background:#18bc9c"><svg width="16" height="16" viewBox="0 0 100 100" preserveAspectRatio="none" fill="#fff" style="display:block;flex:none"><use href="#pencil"/></svg></div>
<div class="a btn" style="left:2282.51px;top:1210.83px;width:28.4px;height:27.5px;background:#e74c3c"><svg width="12" height="14.5" viewBox="0 0 100 100" preserveAspectRatio="none" fill="#fff" style="display:block;flex:none"><use href="#trash"/></svg></div>
<div class="a" style="left:364px;top:1268.5px;width:1976px;height:21px;background:#fbfbfb"></div>
<svg class="a" style="left:371px;top:1272.5px" width="8" height="14.5" viewBox="0 0 8 14.5"><path d="M8 0 L0 7.25 L8 14.5 Z" fill="#8a8a8a"/></svg>
<svg class="a" style="left:2326px;top:1272.5px" width="8" height="14.5" viewBox="0 0 8 14.5"><path d="M0 0 L8 7.25 L0 14.5 Z" fill="#8a8a8a"/></svg>
<div class="a" style="left:390px;top:1273.6px;width:1265px;height:12.3px;background:#8a8a8a;border-radius:6px"></div>
<div class="a" style="left:2382px;top:68px;width:18px;height:1245px;background:#fcfcfc"></div>
<svg class="a" style="left:2386px;top:76px" width="14" height="8" viewBox="0 0 14 8"><path d="M7 0 L14 8 L0 8 Z" fill="#8a8a8a"/></svg>
<svg class="a" style="left:2386px;top:1307px" width="14" height="8" viewBox="0 0 14 8"><path d="M0 0 L14 0 L7 8 Z" fill="#8a8a8a"/></svg>
<div class="a" style="left:2387px;top:94px;width:12px;height:1125px;background:#8a8a8a;border-radius:6px"></div>
</body></html>
